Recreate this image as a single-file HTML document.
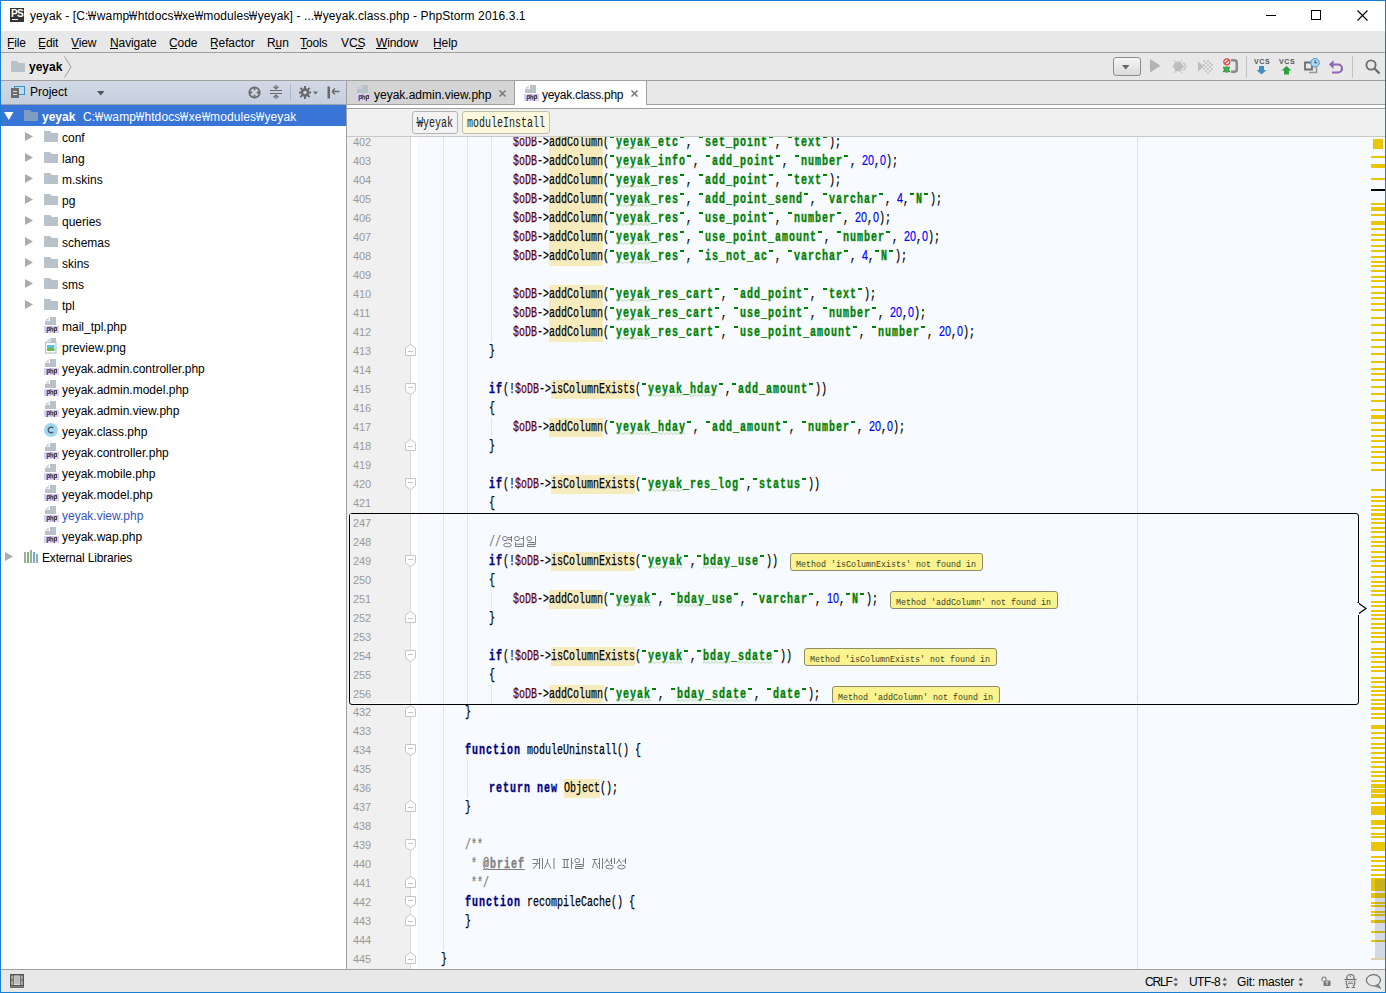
<!DOCTYPE html><html><head><meta charset="utf-8"><style>
*{margin:0;padding:0;box-sizing:border-box}
html,body{width:1386px;height:993px;overflow:hidden;background:#fff}
body{position:relative;font-family:"Liberation Sans",sans-serif;font-size:12px;color:#000}
.a{position:absolute}
.t{position:absolute;white-space:pre;line-height:1}
.dg{font-family:'Liberation Sans',sans-serif;font-size:11px;letter-spacing:-0.12px}
.dgc{font-family:'Liberation Sans',sans-serif;font-size:14px;transform:scaleX(0.7707);transform-origin:0 0;-webkit-text-stroke:0.2px currentColor}
.wn{display:inline-block;width:8.4px;overflow:visible;position:relative}
.wn{transform:scaleX(0.72);transform-origin:0 0}
.wn::after{content:'';position:absolute;left:0;right:-3px;top:5px;height:1px;background:currentColor}
svg{position:absolute;overflow:visible}
.m{font-family:'Liberation Mono',monospace;font-size:14.0px;transform:scaleX(0.7143);transform-origin:0 0;-webkit-text-stroke:0.25px currentColor}.mb{font-weight:bold;letter-spacing:1.400px;-webkit-text-stroke:0.35px currentColor}</style></head><body><div class="a" style="left:0px;top:0px;width:1386px;height:993px;background:#fff"></div><div class="a" style="left:0px;top:0px;width:1386px;height:31px;background:#fff"></div><div class="a" style="left:10px;top:8px;width:14px;height:14px;background:#333"></div><div class="t" style="left:11px;top:9px;font-size:10px;font-weight:bold;color:#fff;letter-spacing:-0.6px">PS</div><div class="a" style="left:12px;top:19px;width:6px;height:1px;background:#fff"></div><div class="t" style="left:30px;top:10px;font-size:12px;color:#000;letter-spacing:0.1px">yeyak - [C:<span class="wn">W</span>wamp<span class="wn">W</span>htdocs<span class="wn">W</span>xe<span class="wn">W</span>modules<span class="wn">W</span>yeyak] - ...<span class="wn">W</span>yeyak.class.php - PhpStorm 2016.3.1</div><div class="a" style="left:1266px;top:15px;width:10px;height:1px;background:#000"></div><div class="a" style="left:1311px;top:10px;width:10px;height:10px;border:1px solid #000"></div><svg style="left:1357px;top:10px" width="11" height="11"><path d="M0.5 0.5L10.5 10.5M10.5 0.5L0.5 10.5" stroke="#000" stroke-width="1.1"/></svg><div class="a" style="left:1px;top:31px;width:1384px;height:21px;background:#e8e8e8"></div><div class="a" style="left:1px;top:52px;width:1384px;height:1px;background:#a0a0a0"></div><div class="a" style="left:1px;top:53px;width:1384px;height:27px;background:#e8e8e8"></div><div class="a" style="left:1px;top:80px;width:1384px;height:1px;background:#a0a0a0"></div><div class="a" style="left:1px;top:81px;width:345px;height:23px;background:linear-gradient(#d2d9e6,#c6cfdd)"></div><div class="a" style="left:1px;top:104px;width:345px;height:1px;background:#9aa3b0"></div><div class="a" style="left:1px;top:105px;width:345px;height:864px;background:#fff"></div><div class="a" style="left:346px;top:81px;width:1px;height:888px;background:#a0a0a0"></div><div class="a" style="left:347px;top:81px;width:1038px;height:23px;background:#e8e8e8"></div><div class="a" style="left:347px;top:104px;width:1038px;height:1px;background:#a0a0a0"></div><div class="a" style="left:347px;top:105px;width:1038px;height:3px;background:#fff"></div><div class="a" style="left:347px;top:108px;width:1038px;height:1px;background:#a0a0a0"></div><div class="a" style="left:347px;top:109px;width:1038px;height:27px;background:#f0f0f0"></div><div class="a" style="left:347px;top:136px;width:1038px;height:1px;background:#c8c8c8"></div><div class="a" style="left:347px;top:137px;width:1038px;height:832px;background:#f7faff"></div><div class="a" style="left:347px;top:137px;width:63px;height:832px;background:#f0f0f0"></div><div class="a" style="left:410px;top:137px;width:1px;height:832px;background:#d8d8d8"></div><div class="a" style="left:411px;top:137px;width:6px;height:832px;background:#fff"></div><div class="t" style="left:7px;top:37px;font-size:12px;color:#000;letter-spacing:-0.1px">File</div><div class="t" style="left:38px;top:37px;font-size:12px;color:#000;letter-spacing:-0.1px">Edit</div><div class="t" style="left:71px;top:37px;font-size:12px;color:#000;letter-spacing:-0.1px">View</div><div class="t" style="left:110px;top:37px;font-size:12px;color:#000;letter-spacing:-0.1px">Navigate</div><div class="t" style="left:169px;top:37px;font-size:12px;color:#000;letter-spacing:-0.1px">Code</div><div class="t" style="left:210px;top:37px;font-size:12px;color:#000;letter-spacing:-0.1px">Refactor</div><div class="t" style="left:267px;top:37px;font-size:12px;color:#000;letter-spacing:-0.1px">Run</div><div class="t" style="left:300px;top:37px;font-size:12px;color:#000;letter-spacing:-0.1px">Tools</div><div class="t" style="left:341px;top:37px;font-size:12px;color:#000;letter-spacing:-0.1px">VCS</div><div class="t" style="left:376px;top:37px;font-size:12px;color:#000;letter-spacing:-0.1px">Window</div><div class="t" style="left:433px;top:37px;font-size:12px;color:#000;letter-spacing:-0.1px">Help</div><div class="a" style="left:8px;top:48px;width:6px;height:1px;background:#000"></div><div class="a" style="left:39px;top:48px;width:6px;height:1px;background:#000"></div><div class="a" style="left:72px;top:48px;width:7px;height:1px;background:#000"></div><div class="a" style="left:110px;top:48px;width:8px;height:1px;background:#000"></div><div class="a" style="left:170px;top:48px;width:7px;height:1px;background:#000"></div><div class="a" style="left:211px;top:48px;width:6px;height:1px;background:#000"></div><div class="a" style="left:275px;top:48px;width:6px;height:1px;background:#000"></div><div class="a" style="left:301px;top:48px;width:6px;height:1px;background:#000"></div><div class="a" style="left:356px;top:48px;width:7px;height:1px;background:#000"></div><div class="a" style="left:376px;top:48px;width:11px;height:1px;background:#000"></div><div class="a" style="left:434px;top:48px;width:7px;height:1px;background:#000"></div><svg style="left:11px;top:61px" width="14" height="11"><path d="M0 0H6L8 2H14V11H0Z" fill="#b9c1c9"/></svg><div class="t" style="left:29px;top:61px;font-size:12px;font-weight:bold;color:#000">yeyak</div><svg style="left:64px;top:56px" width="8" height="22"><path d="M0.5 0.5L7 11L0.5 21.5" stroke="#9a9a9a" fill="none" stroke-width="1"/></svg><div class="a" style="left:14px;top:86px;width:11px;height:9px;background:#3d8fc4"></div><div class="a" style="left:15px;top:87px;width:9px;height:7px;background:#b8dcf3"></div><div class="a" style="left:11px;top:88px;width:8px;height:10px;background:#6e6e6e"></div><div class="a" style="left:13px;top:91px;width:4px;height:1px;background:#ddd"></div><div class="a" style="left:13px;top:94px;width:4px;height:1px;background:#ddd"></div><div class="t" style="left:30px;top:86px;font-size:12px;color:#000">Project</div><svg style="left:97px;top:91px" width="8" height="5"><path d="M0 0H7.5L3.75 4.5Z" fill="#555"/></svg><svg style="left:248px;top:86px" width="13" height="13"><circle cx="6.5" cy="6.5" r="5.2" stroke="#6a6a6a" stroke-width="1.8" fill="none"/><path d="M6.5 1V4.2M6.5 8.8V12M1 6.5H4.2M8.8 6.5H12" stroke="#6a6a6a" stroke-width="1.8"/></svg><svg style="left:270px;top:85px" width="12" height="14"><path d="M0 5.5H12M0 8.5H12" stroke="#6a6a6a" stroke-width="1"/><path d="M6 0V4M6 10V14" stroke="#6a6a6a" stroke-width="1.2"/><path d="M3.5 1.5L6 4L8.5 1.5M3.5 12.5L6 10L8.5 12.5" stroke="#6a6a6a" fill="none" stroke-width="1.2"/></svg><div class="a" style="left:290px;top:84px;width:1px;height:17px;background:#b0b7c2"></div><svg style="left:299px;top:86px" width="20" height="13"><g fill="#6a6a6a"><circle cx="6" cy="6.5" r="4.3"/><rect x="5" y="0" width="2" height="13"/><rect x="0" y="5.5" width="12" height="2"/><rect x="5" y="0" width="2" height="13" transform="rotate(45 6 6.5)"/><rect x="5" y="0" width="2" height="13" transform="rotate(-45 6 6.5)"/></g><circle cx="6" cy="6.5" r="1.8" fill="#ccd4e2"/><path d="M14 5.5H19L16.5 8.5Z" fill="#6a6a6a"/></svg><svg style="left:327px;top:86px" width="13" height="13"><rect x="0.5" y="0.5" width="2.5" height="12" fill="#6a6a6a"/><path d="M5 5.5H12.5M5 5.5L8 2.5M5 5.5L8 8.5" stroke="#6a6a6a" stroke-width="1.3" fill="none"/></svg><div class="a" style="left:1px;top:105px;width:345px;height:21px;background:#3875d7"></div><svg style="left:4px;top:112px" width="10" height="9"><path d="M0 0H9.5L4.75 8Z" fill="#fff"/></svg><svg style="left:24px;top:110px" width="14" height="11"><path d="M0 0H6L8 2H14V11H0Z" fill="#7f9cc3"/></svg><div class="t" style="left:42px;top:111px;font-size:12px;font-weight:bold;color:#fff">yeyak</div><div class="t" style="left:83px;top:111px;font-size:12px;color:#fff;letter-spacing:0.1px">C:<span class="wn">W</span>wamp<span class="wn">W</span>htdocs<span class="wn">W</span>xe<span class="wn">W</span>modules<span class="wn">W</span>yeyak</div><svg style="left:25px;top:132px" width="9" height="10"><path d="M0 0L8 4.5L0 9Z" fill="#ababab"/></svg><svg style="left:44px;top:131px" width="14" height="11"><path d="M0 0H6L8 2H14V11H0Z" fill="#b9c1c9"/></svg><div class="t" style="left:62px;top:132px;font-size:12px;color:#000">conf</div><svg style="left:25px;top:153px" width="9" height="10"><path d="M0 0L8 4.5L0 9Z" fill="#ababab"/></svg><svg style="left:44px;top:152px" width="14" height="11"><path d="M0 0H6L8 2H14V11H0Z" fill="#b9c1c9"/></svg><div class="t" style="left:62px;top:153px;font-size:12px;color:#000">lang</div><svg style="left:25px;top:174px" width="9" height="10"><path d="M0 0L8 4.5L0 9Z" fill="#ababab"/></svg><svg style="left:44px;top:173px" width="14" height="11"><path d="M0 0H6L8 2H14V11H0Z" fill="#b9c1c9"/></svg><div class="t" style="left:62px;top:174px;font-size:12px;color:#000">m.skins</div><svg style="left:25px;top:195px" width="9" height="10"><path d="M0 0L8 4.5L0 9Z" fill="#ababab"/></svg><svg style="left:44px;top:194px" width="14" height="11"><path d="M0 0H6L8 2H14V11H0Z" fill="#b9c1c9"/></svg><div class="t" style="left:62px;top:195px;font-size:12px;color:#000">pg</div><svg style="left:25px;top:216px" width="9" height="10"><path d="M0 0L8 4.5L0 9Z" fill="#ababab"/></svg><svg style="left:44px;top:215px" width="14" height="11"><path d="M0 0H6L8 2H14V11H0Z" fill="#b9c1c9"/></svg><div class="t" style="left:62px;top:216px;font-size:12px;color:#000">queries</div><svg style="left:25px;top:237px" width="9" height="10"><path d="M0 0L8 4.5L0 9Z" fill="#ababab"/></svg><svg style="left:44px;top:236px" width="14" height="11"><path d="M0 0H6L8 2H14V11H0Z" fill="#b9c1c9"/></svg><div class="t" style="left:62px;top:237px;font-size:12px;color:#000">schemas</div><svg style="left:25px;top:258px" width="9" height="10"><path d="M0 0L8 4.5L0 9Z" fill="#ababab"/></svg><svg style="left:44px;top:257px" width="14" height="11"><path d="M0 0H6L8 2H14V11H0Z" fill="#b9c1c9"/></svg><div class="t" style="left:62px;top:258px;font-size:12px;color:#000">skins</div><svg style="left:25px;top:279px" width="9" height="10"><path d="M0 0L8 4.5L0 9Z" fill="#ababab"/></svg><svg style="left:44px;top:278px" width="14" height="11"><path d="M0 0H6L8 2H14V11H0Z" fill="#b9c1c9"/></svg><div class="t" style="left:62px;top:279px;font-size:12px;color:#000">sms</div><svg style="left:25px;top:300px" width="9" height="10"><path d="M0 0L8 4.5L0 9Z" fill="#ababab"/></svg><svg style="left:44px;top:299px" width="14" height="11"><path d="M0 0H6L8 2H14V11H0Z" fill="#b9c1c9"/></svg><div class="t" style="left:62px;top:300px;font-size:12px;color:#000">tpl</div><svg style="left:44px;top:317px" width="15" height="16"><path d="M1 3.6L4.7 0.4V3.6Z" fill="#c5cbd1"/><path d="M6 0H12V8H1V4H6Z" fill="#b9c1c9"/><rect x="0" y="9" width="15" height="7" fill="#dccff5"/><path d="M3.2 10.6V16M3.2 10.6H5.3V13.5H3.2M6.8 9.5V14.5M6.8 11.2H8.8V14.5M10.4 10.6V16M10.4 10.6H12.5V13.5H10.4" stroke="#4a4352" stroke-width="1.1" fill="none"/></svg><div class="t" style="left:62px;top:321px;font-size:12px;color:#000">mail_tpl.php</div><svg style="left:45px;top:338px" width="12" height="16"><path d="M1 3.6L4.7 0.4V3.6Z" fill="#c5cbd1"/><path d="M5.5 0H11V4H5.5Z" fill="#b9c1c9"/><rect x="0.5" y="4.5" width="10.5" height="10.5" fill="#fff" stroke="#b9c1c9" stroke-width="1.2"/><rect x="2" y="7" width="7.5" height="6" fill="#5ec0e8"/><path d="M2 10.5Q5 8.5 9.5 11V13H2Z" fill="#6dbb4e"/></svg><div class="t" style="left:62px;top:342px;font-size:12px;color:#000">preview.png</div><svg style="left:44px;top:359px" width="15" height="16"><path d="M1 3.6L4.7 0.4V3.6Z" fill="#c5cbd1"/><path d="M6 0H12V8H1V4H6Z" fill="#b9c1c9"/><rect x="0" y="9" width="15" height="7" fill="#dccff5"/><path d="M3.2 10.6V16M3.2 10.6H5.3V13.5H3.2M6.8 9.5V14.5M6.8 11.2H8.8V14.5M10.4 10.6V16M10.4 10.6H12.5V13.5H10.4" stroke="#4a4352" stroke-width="1.1" fill="none"/></svg><div class="t" style="left:62px;top:363px;font-size:12px;color:#000">yeyak.admin.controller.php</div><svg style="left:44px;top:380px" width="15" height="16"><path d="M1 3.6L4.7 0.4V3.6Z" fill="#c5cbd1"/><path d="M6 0H12V8H1V4H6Z" fill="#b9c1c9"/><rect x="0" y="9" width="15" height="7" fill="#dccff5"/><path d="M3.2 10.6V16M3.2 10.6H5.3V13.5H3.2M6.8 9.5V14.5M6.8 11.2H8.8V14.5M10.4 10.6V16M10.4 10.6H12.5V13.5H10.4" stroke="#4a4352" stroke-width="1.1" fill="none"/></svg><div class="t" style="left:62px;top:384px;font-size:12px;color:#000">yeyak.admin.model.php</div><svg style="left:44px;top:401px" width="15" height="16"><path d="M1 3.6L4.7 0.4V3.6Z" fill="#c5cbd1"/><path d="M6 0H12V8H1V4H6Z" fill="#b9c1c9"/><rect x="0" y="9" width="15" height="7" fill="#dccff5"/><path d="M3.2 10.6V16M3.2 10.6H5.3V13.5H3.2M6.8 9.5V14.5M6.8 11.2H8.8V14.5M10.4 10.6V16M10.4 10.6H12.5V13.5H10.4" stroke="#4a4352" stroke-width="1.1" fill="none"/></svg><div class="t" style="left:62px;top:405px;font-size:12px;color:#000">yeyak.admin.view.php</div><svg style="left:44px;top:423px" width="15" height="15"><circle cx="7" cy="7" r="7" fill="#9fd8ee"/><path d="M9.2 5A2.9 2.9 0 1 0 9.2 9" stroke="#46535b" stroke-width="1.3" fill="none"/></svg><div class="t" style="left:62px;top:426px;font-size:12px;color:#000">yeyak.class.php</div><svg style="left:44px;top:443px" width="15" height="16"><path d="M1 3.6L4.7 0.4V3.6Z" fill="#c5cbd1"/><path d="M6 0H12V8H1V4H6Z" fill="#b9c1c9"/><rect x="0" y="9" width="15" height="7" fill="#dccff5"/><path d="M3.2 10.6V16M3.2 10.6H5.3V13.5H3.2M6.8 9.5V14.5M6.8 11.2H8.8V14.5M10.4 10.6V16M10.4 10.6H12.5V13.5H10.4" stroke="#4a4352" stroke-width="1.1" fill="none"/></svg><div class="t" style="left:62px;top:447px;font-size:12px;color:#000">yeyak.controller.php</div><svg style="left:44px;top:464px" width="15" height="16"><path d="M1 3.6L4.7 0.4V3.6Z" fill="#c5cbd1"/><path d="M6 0H12V8H1V4H6Z" fill="#b9c1c9"/><rect x="0" y="9" width="15" height="7" fill="#dccff5"/><path d="M3.2 10.6V16M3.2 10.6H5.3V13.5H3.2M6.8 9.5V14.5M6.8 11.2H8.8V14.5M10.4 10.6V16M10.4 10.6H12.5V13.5H10.4" stroke="#4a4352" stroke-width="1.1" fill="none"/></svg><div class="t" style="left:62px;top:468px;font-size:12px;color:#000">yeyak.mobile.php</div><svg style="left:44px;top:485px" width="15" height="16"><path d="M1 3.6L4.7 0.4V3.6Z" fill="#c5cbd1"/><path d="M6 0H12V8H1V4H6Z" fill="#b9c1c9"/><rect x="0" y="9" width="15" height="7" fill="#dccff5"/><path d="M3.2 10.6V16M3.2 10.6H5.3V13.5H3.2M6.8 9.5V14.5M6.8 11.2H8.8V14.5M10.4 10.6V16M10.4 10.6H12.5V13.5H10.4" stroke="#4a4352" stroke-width="1.1" fill="none"/></svg><div class="t" style="left:62px;top:489px;font-size:12px;color:#000">yeyak.model.php</div><svg style="left:44px;top:506px" width="15" height="16"><path d="M1 3.6L4.7 0.4V3.6Z" fill="#c5cbd1"/><path d="M6 0H12V8H1V4H6Z" fill="#b9c1c9"/><rect x="0" y="9" width="15" height="7" fill="#dccff5"/><path d="M3.2 10.6V16M3.2 10.6H5.3V13.5H3.2M6.8 9.5V14.5M6.8 11.2H8.8V14.5M10.4 10.6V16M10.4 10.6H12.5V13.5H10.4" stroke="#4a4352" stroke-width="1.1" fill="none"/></svg><div class="t" style="left:62px;top:510px;font-size:12px;color:#3355bb">yeyak.view.php</div><svg style="left:44px;top:527px" width="15" height="16"><path d="M1 3.6L4.7 0.4V3.6Z" fill="#c5cbd1"/><path d="M6 0H12V8H1V4H6Z" fill="#b9c1c9"/><rect x="0" y="9" width="15" height="7" fill="#dccff5"/><path d="M3.2 10.6V16M3.2 10.6H5.3V13.5H3.2M6.8 9.5V14.5M6.8 11.2H8.8V14.5M10.4 10.6V16M10.4 10.6H12.5V13.5H10.4" stroke="#4a4352" stroke-width="1.1" fill="none"/></svg><div class="t" style="left:62px;top:531px;font-size:12px;color:#000">yeyak.wap.php</div><svg style="left:5px;top:552px" width="9" height="10"><path d="M0 0L8 4.5L0 9Z" fill="#ababab"/></svg><svg style="left:24px;top:549px" width="15" height="14"><g stroke-width="1.6"><path d="M1 3V14" stroke="#8a939c"/><path d="M4 3V14" stroke="#5aa846"/><path d="M7 1V14" stroke="#8a939c"/><path d="M10 3V14" stroke="#3ba0d8"/><path d="M13 5V14" stroke="#8a939c"/></g></svg><div class="t" style="left:42px;top:552px;font-size:12px;color:#000;letter-spacing:-0.18px">External Libraries</div><div class="a" style="left:347px;top:81px;width:168px;height:23px;background:#d4d4d4"></div><div class="a" style="left:514px;top:81px;width:1px;height:23px;background:#a0a0a0"></div><div class="a" style="left:515px;top:80px;width:131px;height:28px;background:#fff"></div><div class="a" style="left:515px;top:80px;width:131px;height:1px;background:#a0a0a0"></div><div class="a" style="left:646px;top:80px;width:1px;height:25px;background:#a0a0a0"></div><div class="a" style="left:647px;top:104px;width:738px;height:1px;background:#a0a0a0"></div><svg style="left:356px;top:85px" width="15" height="16"><path d="M1 3.6L4.7 0.4V3.6Z" fill="#c5cbd1"/><path d="M6 0H12V8H1V4H6Z" fill="#b9c1c9"/><rect x="0" y="9" width="15" height="7" fill="#dccff5"/><path d="M3.2 10.6V16M3.2 10.6H5.3V13.5H3.2M6.8 9.5V14.5M6.8 11.2H8.8V14.5M10.4 10.6V16M10.4 10.6H12.5V13.5H10.4" stroke="#4a4352" stroke-width="1.1" fill="none"/></svg><div class="t" style="left:374px;top:89px;font-size:12px;color:#000">yeyak.admin.view.php</div><svg style="left:499px;top:90px" width="7" height="7"><path d="M0.5 0.5L6.5 6.5M6.5 0.5L0.5 6.5" stroke="#777" stroke-width="1.5"/></svg><svg style="left:524px;top:85px" width="15" height="16"><path d="M1 3.6L4.7 0.4V3.6Z" fill="#c5cbd1"/><path d="M6 0H12V8H1V4H6Z" fill="#b9c1c9"/><rect x="0" y="9" width="15" height="7" fill="#dccff5"/><path d="M3.2 10.6V16M3.2 10.6H5.3V13.5H3.2M6.8 9.5V14.5M6.8 11.2H8.8V14.5M10.4 10.6V16M10.4 10.6H12.5V13.5H10.4" stroke="#4a4352" stroke-width="1.1" fill="none"/></svg><div class="t" style="left:542px;top:89px;font-size:12px;color:#000;letter-spacing:-0.28px">yeyak.class.php</div><svg style="left:631px;top:90px" width="7" height="7"><path d="M0.5 0.5L6.5 6.5M6.5 0.5L0.5 6.5" stroke="#777" stroke-width="1.5"/></svg><div class="a" style="left:412px;top:111px;width:46px;height:23px;background:#f3f3f3;border:1px solid #b4b4b4;border-radius:3px"></div><div class="t m" style="left:417px;top:116px;color:#222;-webkit-text-stroke:0"><span style="position:relative">W<span style="position:absolute;left:-1px;right:-1px;top:7px;height:1px;background:#222"></span></span>yeyak</div><div class="a" style="left:462px;top:111px;width:88px;height:23px;background:#fbf8dc;border:1px solid #c2c0a8;border-radius:3px"></div><div class="t m" style="left:467px;top:116px;color:#222;-webkit-text-stroke:0">moduleInstall</div><div class="a" style="left:0;top:0;width:1386px;height:993px;clip-path:inset(137px 0 24px 0)"><div class="a" style="left:443px;top:137px;width:1px;height:813px;background:#e2e5ea"></div><div class="a" style="left:467px;top:137px;width:1px;height:567px;background:#e2e5ea"></div><div class="a" style="left:491px;top:137px;width:1px;height:205px;background:#e2e5ea"></div><div class="a" style="left:491px;top:418px;width:1px;height:19px;background:#e2e5ea"></div><div class="a" style="left:467px;top:760px;width:1px;height:38px;background:#e2e5ea"></div><div class="t dg" style="left:353px;top:137px;color:#999">402</div><div class="t m" style="left:513px;top:135px;color:#660000;">$oDB</div><div class="t m" style="left:537px;top:135px;color:#000;">-</div><div class="t m" style="left:543px;top:135px;color:#000;">&gt;</div><div class="a" style="left:549px;top:133px;width:54px;height:19px;background:#f6ebbc"></div><div class="t m" style="left:549px;top:135px;color:#000;">addColumn</div><div class="t m" style="left:603px;top:135px;color:#000;">(</div><div class="t m mb" style="left:616px;top:135px;color:#008000;">yeyak_etc</div><div class="a" style="left:610px;top:136px;width:4px;height:2px;background:#008000"></div><div class="a" style="left:680px;top:136px;width:4px;height:2px;background:#008000"></div><svg style="left:616px;top:147px" width="35" height="3"><path d="M0 2.5 L1 0.5 L3 2.5 L5 0.5 L7 2.5 L9 0.5 L11 2.5 L13 0.5 L15 2.5 L17 0.5 L19 2.5 L21 0.5 L23 2.5 L25 0.5 L27 2.5 L29 0.5 L31 2.5 L33 0.5 L35 2.5" stroke="#b3d8b3" stroke-width="1" fill="none"/></svg><div class="t m" style="left:686px;top:135px;color:#000;">,</div><div class="t m mb" style="left:705px;top:135px;color:#008000;">set_point</div><div class="a" style="left:699px;top:136px;width:4px;height:2px;background:#008000"></div><div class="a" style="left:769px;top:136px;width:4px;height:2px;background:#008000"></div><div class="t m" style="left:775px;top:135px;color:#000;">,</div><div class="t m mb" style="left:794px;top:135px;color:#008000;">text</div><div class="a" style="left:788px;top:136px;width:4px;height:2px;background:#008000"></div><div class="a" style="left:823px;top:136px;width:4px;height:2px;background:#008000"></div><div class="t m" style="left:829px;top:135px;color:#000;">)</div><div class="t m" style="left:835px;top:135px;color:#000;">;</div><div class="t dg" style="left:353px;top:156px;color:#999">403</div><div class="t m" style="left:513px;top:154px;color:#660000;">$oDB</div><div class="t m" style="left:537px;top:154px;color:#000;">-</div><div class="t m" style="left:543px;top:154px;color:#000;">&gt;</div><div class="a" style="left:549px;top:152px;width:54px;height:19px;background:#f6ebbc"></div><div class="t m" style="left:549px;top:154px;color:#000;">addColumn</div><div class="t m" style="left:603px;top:154px;color:#000;">(</div><div class="t m mb" style="left:616px;top:154px;color:#008000;">yeyak_info</div><div class="a" style="left:610px;top:155px;width:4px;height:2px;background:#008000"></div><div class="a" style="left:687px;top:155px;width:4px;height:2px;background:#008000"></div><svg style="left:616px;top:166px" width="35" height="3"><path d="M0 2.5 L1 0.5 L3 2.5 L5 0.5 L7 2.5 L9 0.5 L11 2.5 L13 0.5 L15 2.5 L17 0.5 L19 2.5 L21 0.5 L23 2.5 L25 0.5 L27 2.5 L29 0.5 L31 2.5 L33 0.5 L35 2.5" stroke="#b3d8b3" stroke-width="1" fill="none"/></svg><div class="t m" style="left:693px;top:154px;color:#000;">,</div><div class="t m mb" style="left:712px;top:154px;color:#008000;">add_point</div><div class="a" style="left:706px;top:155px;width:4px;height:2px;background:#008000"></div><div class="a" style="left:776px;top:155px;width:4px;height:2px;background:#008000"></div><div class="t m" style="left:782px;top:154px;color:#000;">,</div><div class="t m mb" style="left:801px;top:154px;color:#008000;">number</div><div class="a" style="left:795px;top:155px;width:4px;height:2px;background:#008000"></div><div class="a" style="left:844px;top:155px;width:4px;height:2px;background:#008000"></div><div class="t m" style="left:850px;top:154px;color:#000;">,</div><div class="t dgc" style="left:862px;top:153px;color:#0000ff">20</div><div class="t m" style="left:874px;top:154px;color:#000;">,</div><div class="t dgc" style="left:880px;top:153px;color:#0000ff">0</div><div class="t m" style="left:886px;top:154px;color:#000;">)</div><div class="t m" style="left:892px;top:154px;color:#000;">;</div><div class="t dg" style="left:353px;top:175px;color:#999">404</div><div class="t m" style="left:513px;top:173px;color:#660000;">$oDB</div><div class="t m" style="left:537px;top:173px;color:#000;">-</div><div class="t m" style="left:543px;top:173px;color:#000;">&gt;</div><div class="a" style="left:549px;top:171px;width:54px;height:19px;background:#f6ebbc"></div><div class="t m" style="left:549px;top:173px;color:#000;">addColumn</div><div class="t m" style="left:603px;top:173px;color:#000;">(</div><div class="t m mb" style="left:616px;top:173px;color:#008000;">yeyak_res</div><div class="a" style="left:610px;top:174px;width:4px;height:2px;background:#008000"></div><div class="a" style="left:680px;top:174px;width:4px;height:2px;background:#008000"></div><svg style="left:616px;top:185px" width="35" height="3"><path d="M0 2.5 L1 0.5 L3 2.5 L5 0.5 L7 2.5 L9 0.5 L11 2.5 L13 0.5 L15 2.5 L17 0.5 L19 2.5 L21 0.5 L23 2.5 L25 0.5 L27 2.5 L29 0.5 L31 2.5 L33 0.5 L35 2.5" stroke="#b3d8b3" stroke-width="1" fill="none"/></svg><div class="t m" style="left:686px;top:173px;color:#000;">,</div><div class="t m mb" style="left:705px;top:173px;color:#008000;">add_point</div><div class="a" style="left:699px;top:174px;width:4px;height:2px;background:#008000"></div><div class="a" style="left:769px;top:174px;width:4px;height:2px;background:#008000"></div><div class="t m" style="left:775px;top:173px;color:#000;">,</div><div class="t m mb" style="left:794px;top:173px;color:#008000;">text</div><div class="a" style="left:788px;top:174px;width:4px;height:2px;background:#008000"></div><div class="a" style="left:823px;top:174px;width:4px;height:2px;background:#008000"></div><div class="t m" style="left:829px;top:173px;color:#000;">)</div><div class="t m" style="left:835px;top:173px;color:#000;">;</div><div class="t dg" style="left:353px;top:194px;color:#999">405</div><div class="t m" style="left:513px;top:192px;color:#660000;">$oDB</div><div class="t m" style="left:537px;top:192px;color:#000;">-</div><div class="t m" style="left:543px;top:192px;color:#000;">&gt;</div><div class="a" style="left:549px;top:190px;width:54px;height:19px;background:#f6ebbc"></div><div class="t m" style="left:549px;top:192px;color:#000;">addColumn</div><div class="t m" style="left:603px;top:192px;color:#000;">(</div><div class="t m mb" style="left:616px;top:192px;color:#008000;">yeyak_res</div><div class="a" style="left:610px;top:193px;width:4px;height:2px;background:#008000"></div><div class="a" style="left:680px;top:193px;width:4px;height:2px;background:#008000"></div><svg style="left:616px;top:204px" width="35" height="3"><path d="M0 2.5 L1 0.5 L3 2.5 L5 0.5 L7 2.5 L9 0.5 L11 2.5 L13 0.5 L15 2.5 L17 0.5 L19 2.5 L21 0.5 L23 2.5 L25 0.5 L27 2.5 L29 0.5 L31 2.5 L33 0.5 L35 2.5" stroke="#b3d8b3" stroke-width="1" fill="none"/></svg><div class="t m" style="left:686px;top:192px;color:#000;">,</div><div class="t m mb" style="left:705px;top:192px;color:#008000;">add_point_send</div><div class="a" style="left:699px;top:193px;width:4px;height:2px;background:#008000"></div><div class="a" style="left:804px;top:193px;width:4px;height:2px;background:#008000"></div><div class="t m" style="left:810px;top:192px;color:#000;">,</div><div class="t m mb" style="left:829px;top:192px;color:#008000;">varchar</div><div class="a" style="left:823px;top:193px;width:4px;height:2px;background:#008000"></div><div class="a" style="left:879px;top:193px;width:4px;height:2px;background:#008000"></div><div class="t m" style="left:885px;top:192px;color:#000;">,</div><div class="t dgc" style="left:897px;top:191px;color:#0000ff">4</div><div class="t m" style="left:903px;top:192px;color:#000;">,</div><div class="t m mb" style="left:916px;top:192px;color:#008000;">N</div><div class="a" style="left:910px;top:193px;width:4px;height:2px;background:#008000"></div><div class="a" style="left:924px;top:193px;width:4px;height:2px;background:#008000"></div><div class="t m" style="left:930px;top:192px;color:#000;">)</div><div class="t m" style="left:936px;top:192px;color:#000;">;</div><div class="t dg" style="left:353px;top:213px;color:#999">406</div><div class="t m" style="left:513px;top:211px;color:#660000;">$oDB</div><div class="t m" style="left:537px;top:211px;color:#000;">-</div><div class="t m" style="left:543px;top:211px;color:#000;">&gt;</div><div class="a" style="left:549px;top:209px;width:54px;height:19px;background:#f6ebbc"></div><div class="t m" style="left:549px;top:211px;color:#000;">addColumn</div><div class="t m" style="left:603px;top:211px;color:#000;">(</div><div class="t m mb" style="left:616px;top:211px;color:#008000;">yeyak_res</div><div class="a" style="left:610px;top:212px;width:4px;height:2px;background:#008000"></div><div class="a" style="left:680px;top:212px;width:4px;height:2px;background:#008000"></div><svg style="left:616px;top:223px" width="35" height="3"><path d="M0 2.5 L1 0.5 L3 2.5 L5 0.5 L7 2.5 L9 0.5 L11 2.5 L13 0.5 L15 2.5 L17 0.5 L19 2.5 L21 0.5 L23 2.5 L25 0.5 L27 2.5 L29 0.5 L31 2.5 L33 0.5 L35 2.5" stroke="#b3d8b3" stroke-width="1" fill="none"/></svg><div class="t m" style="left:686px;top:211px;color:#000;">,</div><div class="t m mb" style="left:705px;top:211px;color:#008000;">use_point</div><div class="a" style="left:699px;top:212px;width:4px;height:2px;background:#008000"></div><div class="a" style="left:769px;top:212px;width:4px;height:2px;background:#008000"></div><div class="t m" style="left:775px;top:211px;color:#000;">,</div><div class="t m mb" style="left:794px;top:211px;color:#008000;">number</div><div class="a" style="left:788px;top:212px;width:4px;height:2px;background:#008000"></div><div class="a" style="left:837px;top:212px;width:4px;height:2px;background:#008000"></div><div class="t m" style="left:843px;top:211px;color:#000;">,</div><div class="t dgc" style="left:855px;top:210px;color:#0000ff">20</div><div class="t m" style="left:867px;top:211px;color:#000;">,</div><div class="t dgc" style="left:873px;top:210px;color:#0000ff">0</div><div class="t m" style="left:879px;top:211px;color:#000;">)</div><div class="t m" style="left:885px;top:211px;color:#000;">;</div><div class="t dg" style="left:353px;top:232px;color:#999">407</div><div class="t m" style="left:513px;top:230px;color:#660000;">$oDB</div><div class="t m" style="left:537px;top:230px;color:#000;">-</div><div class="t m" style="left:543px;top:230px;color:#000;">&gt;</div><div class="a" style="left:549px;top:228px;width:54px;height:19px;background:#f6ebbc"></div><div class="t m" style="left:549px;top:230px;color:#000;">addColumn</div><div class="t m" style="left:603px;top:230px;color:#000;">(</div><div class="t m mb" style="left:616px;top:230px;color:#008000;">yeyak_res</div><div class="a" style="left:610px;top:231px;width:4px;height:2px;background:#008000"></div><div class="a" style="left:680px;top:231px;width:4px;height:2px;background:#008000"></div><svg style="left:616px;top:242px" width="35" height="3"><path d="M0 2.5 L1 0.5 L3 2.5 L5 0.5 L7 2.5 L9 0.5 L11 2.5 L13 0.5 L15 2.5 L17 0.5 L19 2.5 L21 0.5 L23 2.5 L25 0.5 L27 2.5 L29 0.5 L31 2.5 L33 0.5 L35 2.5" stroke="#b3d8b3" stroke-width="1" fill="none"/></svg><div class="t m" style="left:686px;top:230px;color:#000;">,</div><div class="t m mb" style="left:705px;top:230px;color:#008000;">use_point_amount</div><div class="a" style="left:699px;top:231px;width:4px;height:2px;background:#008000"></div><div class="a" style="left:818px;top:231px;width:4px;height:2px;background:#008000"></div><div class="t m" style="left:824px;top:230px;color:#000;">,</div><div class="t m mb" style="left:843px;top:230px;color:#008000;">number</div><div class="a" style="left:837px;top:231px;width:4px;height:2px;background:#008000"></div><div class="a" style="left:886px;top:231px;width:4px;height:2px;background:#008000"></div><div class="t m" style="left:892px;top:230px;color:#000;">,</div><div class="t dgc" style="left:904px;top:229px;color:#0000ff">20</div><div class="t m" style="left:916px;top:230px;color:#000;">,</div><div class="t dgc" style="left:922px;top:229px;color:#0000ff">0</div><div class="t m" style="left:928px;top:230px;color:#000;">)</div><div class="t m" style="left:934px;top:230px;color:#000;">;</div><div class="t dg" style="left:353px;top:251px;color:#999">408</div><div class="t m" style="left:513px;top:249px;color:#660000;">$oDB</div><div class="t m" style="left:537px;top:249px;color:#000;">-</div><div class="t m" style="left:543px;top:249px;color:#000;">&gt;</div><div class="a" style="left:549px;top:247px;width:54px;height:19px;background:#f6ebbc"></div><div class="t m" style="left:549px;top:249px;color:#000;">addColumn</div><div class="t m" style="left:603px;top:249px;color:#000;">(</div><div class="t m mb" style="left:616px;top:249px;color:#008000;">yeyak_res</div><div class="a" style="left:610px;top:250px;width:4px;height:2px;background:#008000"></div><div class="a" style="left:680px;top:250px;width:4px;height:2px;background:#008000"></div><svg style="left:616px;top:261px" width="35" height="3"><path d="M0 2.5 L1 0.5 L3 2.5 L5 0.5 L7 2.5 L9 0.5 L11 2.5 L13 0.5 L15 2.5 L17 0.5 L19 2.5 L21 0.5 L23 2.5 L25 0.5 L27 2.5 L29 0.5 L31 2.5 L33 0.5 L35 2.5" stroke="#b3d8b3" stroke-width="1" fill="none"/></svg><div class="t m" style="left:686px;top:249px;color:#000;">,</div><div class="t m mb" style="left:705px;top:249px;color:#008000;">is_not_ac</div><div class="a" style="left:699px;top:250px;width:4px;height:2px;background:#008000"></div><div class="a" style="left:769px;top:250px;width:4px;height:2px;background:#008000"></div><div class="t m" style="left:775px;top:249px;color:#000;">,</div><div class="t m mb" style="left:794px;top:249px;color:#008000;">varchar</div><div class="a" style="left:788px;top:250px;width:4px;height:2px;background:#008000"></div><div class="a" style="left:844px;top:250px;width:4px;height:2px;background:#008000"></div><div class="t m" style="left:850px;top:249px;color:#000;">,</div><div class="t dgc" style="left:862px;top:248px;color:#0000ff">4</div><div class="t m" style="left:868px;top:249px;color:#000;">,</div><div class="t m mb" style="left:881px;top:249px;color:#008000;">N</div><div class="a" style="left:875px;top:250px;width:4px;height:2px;background:#008000"></div><div class="a" style="left:889px;top:250px;width:4px;height:2px;background:#008000"></div><div class="t m" style="left:895px;top:249px;color:#000;">)</div><div class="t m" style="left:901px;top:249px;color:#000;">;</div><div class="t dg" style="left:353px;top:270px;color:#999">409</div><div class="t dg" style="left:353px;top:289px;color:#999">410</div><div class="t m" style="left:513px;top:287px;color:#660000;">$oDB</div><div class="t m" style="left:537px;top:287px;color:#000;">-</div><div class="t m" style="left:543px;top:287px;color:#000;">&gt;</div><div class="a" style="left:549px;top:285px;width:54px;height:19px;background:#f6ebbc"></div><div class="t m" style="left:549px;top:287px;color:#000;">addColumn</div><div class="t m" style="left:603px;top:287px;color:#000;">(</div><div class="t m mb" style="left:616px;top:287px;color:#008000;">yeyak_res_cart</div><div class="a" style="left:610px;top:288px;width:4px;height:2px;background:#008000"></div><div class="a" style="left:715px;top:288px;width:4px;height:2px;background:#008000"></div><svg style="left:616px;top:299px" width="35" height="3"><path d="M0 2.5 L1 0.5 L3 2.5 L5 0.5 L7 2.5 L9 0.5 L11 2.5 L13 0.5 L15 2.5 L17 0.5 L19 2.5 L21 0.5 L23 2.5 L25 0.5 L27 2.5 L29 0.5 L31 2.5 L33 0.5 L35 2.5" stroke="#b3d8b3" stroke-width="1" fill="none"/></svg><div class="t m" style="left:721px;top:287px;color:#000;">,</div><div class="t m mb" style="left:740px;top:287px;color:#008000;">add_point</div><div class="a" style="left:734px;top:288px;width:4px;height:2px;background:#008000"></div><div class="a" style="left:804px;top:288px;width:4px;height:2px;background:#008000"></div><div class="t m" style="left:810px;top:287px;color:#000;">,</div><div class="t m mb" style="left:829px;top:287px;color:#008000;">text</div><div class="a" style="left:823px;top:288px;width:4px;height:2px;background:#008000"></div><div class="a" style="left:858px;top:288px;width:4px;height:2px;background:#008000"></div><div class="t m" style="left:864px;top:287px;color:#000;">)</div><div class="t m" style="left:870px;top:287px;color:#000;">;</div><div class="t dg" style="left:353px;top:308px;color:#999">411</div><div class="t m" style="left:513px;top:306px;color:#660000;">$oDB</div><div class="t m" style="left:537px;top:306px;color:#000;">-</div><div class="t m" style="left:543px;top:306px;color:#000;">&gt;</div><div class="a" style="left:549px;top:304px;width:54px;height:19px;background:#f6ebbc"></div><div class="t m" style="left:549px;top:306px;color:#000;">addColumn</div><div class="t m" style="left:603px;top:306px;color:#000;">(</div><div class="t m mb" style="left:616px;top:306px;color:#008000;">yeyak_res_cart</div><div class="a" style="left:610px;top:307px;width:4px;height:2px;background:#008000"></div><div class="a" style="left:715px;top:307px;width:4px;height:2px;background:#008000"></div><svg style="left:616px;top:318px" width="35" height="3"><path d="M0 2.5 L1 0.5 L3 2.5 L5 0.5 L7 2.5 L9 0.5 L11 2.5 L13 0.5 L15 2.5 L17 0.5 L19 2.5 L21 0.5 L23 2.5 L25 0.5 L27 2.5 L29 0.5 L31 2.5 L33 0.5 L35 2.5" stroke="#b3d8b3" stroke-width="1" fill="none"/></svg><div class="t m" style="left:721px;top:306px;color:#000;">,</div><div class="t m mb" style="left:740px;top:306px;color:#008000;">use_point</div><div class="a" style="left:734px;top:307px;width:4px;height:2px;background:#008000"></div><div class="a" style="left:804px;top:307px;width:4px;height:2px;background:#008000"></div><div class="t m" style="left:810px;top:306px;color:#000;">,</div><div class="t m mb" style="left:829px;top:306px;color:#008000;">number</div><div class="a" style="left:823px;top:307px;width:4px;height:2px;background:#008000"></div><div class="a" style="left:872px;top:307px;width:4px;height:2px;background:#008000"></div><div class="t m" style="left:878px;top:306px;color:#000;">,</div><div class="t dgc" style="left:890px;top:305px;color:#0000ff">20</div><div class="t m" style="left:902px;top:306px;color:#000;">,</div><div class="t dgc" style="left:908px;top:305px;color:#0000ff">0</div><div class="t m" style="left:914px;top:306px;color:#000;">)</div><div class="t m" style="left:920px;top:306px;color:#000;">;</div><div class="t dg" style="left:353px;top:327px;color:#999">412</div><div class="t m" style="left:513px;top:325px;color:#660000;">$oDB</div><div class="t m" style="left:537px;top:325px;color:#000;">-</div><div class="t m" style="left:543px;top:325px;color:#000;">&gt;</div><div class="a" style="left:549px;top:323px;width:54px;height:19px;background:#f6ebbc"></div><div class="t m" style="left:549px;top:325px;color:#000;">addColumn</div><div class="t m" style="left:603px;top:325px;color:#000;">(</div><div class="t m mb" style="left:616px;top:325px;color:#008000;">yeyak_res_cart</div><div class="a" style="left:610px;top:326px;width:4px;height:2px;background:#008000"></div><div class="a" style="left:715px;top:326px;width:4px;height:2px;background:#008000"></div><svg style="left:616px;top:337px" width="35" height="3"><path d="M0 2.5 L1 0.5 L3 2.5 L5 0.5 L7 2.5 L9 0.5 L11 2.5 L13 0.5 L15 2.5 L17 0.5 L19 2.5 L21 0.5 L23 2.5 L25 0.5 L27 2.5 L29 0.5 L31 2.5 L33 0.5 L35 2.5" stroke="#b3d8b3" stroke-width="1" fill="none"/></svg><div class="t m" style="left:721px;top:325px;color:#000;">,</div><div class="t m mb" style="left:740px;top:325px;color:#008000;">use_point_amount</div><div class="a" style="left:734px;top:326px;width:4px;height:2px;background:#008000"></div><div class="a" style="left:853px;top:326px;width:4px;height:2px;background:#008000"></div><div class="t m" style="left:859px;top:325px;color:#000;">,</div><div class="t m mb" style="left:878px;top:325px;color:#008000;">number</div><div class="a" style="left:872px;top:326px;width:4px;height:2px;background:#008000"></div><div class="a" style="left:921px;top:326px;width:4px;height:2px;background:#008000"></div><div class="t m" style="left:927px;top:325px;color:#000;">,</div><div class="t dgc" style="left:939px;top:324px;color:#0000ff">20</div><div class="t m" style="left:951px;top:325px;color:#000;">,</div><div class="t dgc" style="left:957px;top:324px;color:#0000ff">0</div><div class="t m" style="left:963px;top:325px;color:#000;">)</div><div class="t m" style="left:969px;top:325px;color:#000;">;</div><div class="t dg" style="left:353px;top:346px;color:#999">413</div><div class="t m" style="left:489px;top:344px;color:#000;">}</div><div class="t dg" style="left:353px;top:365px;color:#999">414</div><div class="t dg" style="left:353px;top:384px;color:#999">415</div><div class="t m mb" style="left:489px;top:382px;color:#000080;">if</div><div class="t m" style="left:503px;top:382px;color:#000;">(</div><div class="t m" style="left:509px;top:382px;color:#000;">!</div><div class="t m" style="left:515px;top:382px;color:#660000;">$oDB</div><div class="t m" style="left:539px;top:382px;color:#000;">-</div><div class="t m" style="left:545px;top:382px;color:#000;">&gt;</div><div class="a" style="left:551px;top:380px;width:84px;height:19px;background:#f6ebbc"></div><div class="t m" style="left:551px;top:382px;color:#000;">isColumnExists</div><div class="t m" style="left:635px;top:382px;color:#000;">(</div><div class="t m mb" style="left:648px;top:382px;color:#008000;">yeyak_hday</div><div class="a" style="left:642px;top:383px;width:4px;height:2px;background:#008000"></div><div class="a" style="left:719px;top:383px;width:4px;height:2px;background:#008000"></div><svg style="left:648px;top:394px" width="35" height="3"><path d="M0 2.5 L1 0.5 L3 2.5 L5 0.5 L7 2.5 L9 0.5 L11 2.5 L13 0.5 L15 2.5 L17 0.5 L19 2.5 L21 0.5 L23 2.5 L25 0.5 L27 2.5 L29 0.5 L31 2.5 L33 0.5 L35 2.5" stroke="#b3d8b3" stroke-width="1" fill="none"/></svg><svg style="left:690px;top:394px" width="28" height="3"><path d="M0 2.5 L1 0.5 L3 2.5 L5 0.5 L7 2.5 L9 0.5 L11 2.5 L13 0.5 L15 2.5 L17 0.5 L19 2.5 L21 0.5 L23 2.5 L25 0.5 L27 2.5" stroke="#b3d8b3" stroke-width="1" fill="none"/></svg><div class="t m" style="left:725px;top:382px;color:#000;">,</div><div class="t m mb" style="left:738px;top:382px;color:#008000;">add_amount</div><div class="a" style="left:732px;top:383px;width:4px;height:2px;background:#008000"></div><div class="a" style="left:809px;top:383px;width:4px;height:2px;background:#008000"></div><div class="t m" style="left:815px;top:382px;color:#000;">)</div><div class="t m" style="left:821px;top:382px;color:#000;">)</div><div class="t dg" style="left:353px;top:403px;color:#999">416</div><div class="t m" style="left:489px;top:401px;color:#000;">{</div><div class="t dg" style="left:353px;top:422px;color:#999">417</div><div class="t m" style="left:513px;top:420px;color:#660000;">$oDB</div><div class="t m" style="left:537px;top:420px;color:#000;">-</div><div class="t m" style="left:543px;top:420px;color:#000;">&gt;</div><div class="a" style="left:549px;top:418px;width:54px;height:19px;background:#f6ebbc"></div><div class="t m" style="left:549px;top:420px;color:#000;">addColumn</div><div class="t m" style="left:603px;top:420px;color:#000;">(</div><div class="t m mb" style="left:616px;top:420px;color:#008000;">yeyak_hday</div><div class="a" style="left:610px;top:421px;width:4px;height:2px;background:#008000"></div><div class="a" style="left:687px;top:421px;width:4px;height:2px;background:#008000"></div><svg style="left:616px;top:432px" width="35" height="3"><path d="M0 2.5 L1 0.5 L3 2.5 L5 0.5 L7 2.5 L9 0.5 L11 2.5 L13 0.5 L15 2.5 L17 0.5 L19 2.5 L21 0.5 L23 2.5 L25 0.5 L27 2.5 L29 0.5 L31 2.5 L33 0.5 L35 2.5" stroke="#b3d8b3" stroke-width="1" fill="none"/></svg><svg style="left:658px;top:432px" width="28" height="3"><path d="M0 2.5 L1 0.5 L3 2.5 L5 0.5 L7 2.5 L9 0.5 L11 2.5 L13 0.5 L15 2.5 L17 0.5 L19 2.5 L21 0.5 L23 2.5 L25 0.5 L27 2.5" stroke="#b3d8b3" stroke-width="1" fill="none"/></svg><div class="t m" style="left:693px;top:420px;color:#000;">,</div><div class="t m mb" style="left:712px;top:420px;color:#008000;">add_amount</div><div class="a" style="left:706px;top:421px;width:4px;height:2px;background:#008000"></div><div class="a" style="left:783px;top:421px;width:4px;height:2px;background:#008000"></div><div class="t m" style="left:789px;top:420px;color:#000;">,</div><div class="t m mb" style="left:808px;top:420px;color:#008000;">number</div><div class="a" style="left:802px;top:421px;width:4px;height:2px;background:#008000"></div><div class="a" style="left:851px;top:421px;width:4px;height:2px;background:#008000"></div><div class="t m" style="left:857px;top:420px;color:#000;">,</div><div class="t dgc" style="left:869px;top:419px;color:#0000ff">20</div><div class="t m" style="left:881px;top:420px;color:#000;">,</div><div class="t dgc" style="left:887px;top:419px;color:#0000ff">0</div><div class="t m" style="left:893px;top:420px;color:#000;">)</div><div class="t m" style="left:899px;top:420px;color:#000;">;</div><div class="t dg" style="left:353px;top:441px;color:#999">418</div><div class="t m" style="left:489px;top:439px;color:#000;">}</div><div class="t dg" style="left:353px;top:460px;color:#999">419</div><div class="t dg" style="left:353px;top:479px;color:#999">420</div><div class="t m mb" style="left:489px;top:477px;color:#000080;">if</div><div class="t m" style="left:503px;top:477px;color:#000;">(</div><div class="t m" style="left:509px;top:477px;color:#000;">!</div><div class="t m" style="left:515px;top:477px;color:#660000;">$oDB</div><div class="t m" style="left:539px;top:477px;color:#000;">-</div><div class="t m" style="left:545px;top:477px;color:#000;">&gt;</div><div class="a" style="left:551px;top:475px;width:84px;height:19px;background:#f6ebbc"></div><div class="t m" style="left:551px;top:477px;color:#000;">isColumnExists</div><div class="t m" style="left:635px;top:477px;color:#000;">(</div><div class="t m mb" style="left:648px;top:477px;color:#008000;">yeyak_res_log</div><div class="a" style="left:642px;top:478px;width:4px;height:2px;background:#008000"></div><div class="a" style="left:740px;top:478px;width:4px;height:2px;background:#008000"></div><svg style="left:648px;top:489px" width="35" height="3"><path d="M0 2.5 L1 0.5 L3 2.5 L5 0.5 L7 2.5 L9 0.5 L11 2.5 L13 0.5 L15 2.5 L17 0.5 L19 2.5 L21 0.5 L23 2.5 L25 0.5 L27 2.5 L29 0.5 L31 2.5 L33 0.5 L35 2.5" stroke="#b3d8b3" stroke-width="1" fill="none"/></svg><div class="t m" style="left:746px;top:477px;color:#000;">,</div><div class="t m mb" style="left:759px;top:477px;color:#008000;">status</div><div class="a" style="left:753px;top:478px;width:4px;height:2px;background:#008000"></div><div class="a" style="left:802px;top:478px;width:4px;height:2px;background:#008000"></div><div class="t m" style="left:808px;top:477px;color:#000;">)</div><div class="t m" style="left:814px;top:477px;color:#000;">)</div><div class="t dg" style="left:353px;top:498px;color:#999">421</div><div class="t m" style="left:489px;top:496px;color:#000;">{</div><div class="t dg" style="left:353px;top:707px;color:#999">432</div><div class="t m" style="left:465px;top:705px;color:#000;">}</div><div class="t dg" style="left:353px;top:726px;color:#999">433</div><div class="t dg" style="left:353px;top:745px;color:#999">434</div><div class="t m mb" style="left:465px;top:743px;color:#000080;">function</div><div class="t m" style="left:527px;top:743px;color:#000;">moduleUninstall</div><div class="t m" style="left:617px;top:743px;color:#000;">(</div><div class="t m" style="left:623px;top:743px;color:#000;">)</div><div class="t m" style="left:635px;top:743px;color:#000;">{</div><div class="t dg" style="left:353px;top:764px;color:#999">435</div><div class="t dg" style="left:353px;top:783px;color:#999">436</div><div class="t m mb" style="left:489px;top:781px;color:#000080;">return</div><div class="t m mb" style="left:537px;top:781px;color:#000080;">new</div><div class="a" style="left:564px;top:779px;width:36px;height:19px;background:#f6ebbc"></div><div class="t m" style="left:564px;top:781px;color:#000;">Object</div><div class="t m" style="left:600px;top:781px;color:#000;">(</div><div class="t m" style="left:606px;top:781px;color:#000;">)</div><div class="t m" style="left:612px;top:781px;color:#000;">;</div><div class="t dg" style="left:353px;top:802px;color:#999">437</div><div class="t m" style="left:465px;top:800px;color:#000;">}</div><div class="t dg" style="left:353px;top:821px;color:#999">438</div><div class="t dg" style="left:353px;top:840px;color:#999">439</div><div class="t m" style="left:417px;top:838px;color:#808080;">        /**</div><div class="t dg" style="left:353px;top:859px;color:#999">440</div><div class="t m" style="left:471px;top:857px;color:#808080;">* </div><div class="t m mb" style="left:483px;top:857px;color:#808080;text-decoration:underline">@brief</div><div class="t m" style="left:525px;top:857px;color:#808080;"> </div><svg style="left:532px;top:858px" width="12" height="12"><g stroke="#7a7a7a" stroke-width="1" fill="none"><path d="M0.5 1.5H5.5Q5.5 8 1 10.5M0.5 5.5H5M7.5 0V11M10.5 0V11M5.8 5.5H7.5"/></g></svg><svg style="left:544px;top:858px" width="12" height="12"><g stroke="#7a7a7a" stroke-width="1" fill="none"><path d="M3.5 1V4L0.5 10.5M3.5 4L7 10.5M10 0V11"/></g></svg><div class="t m" style="left:555px;top:857px;color:#808080;"> </div><svg style="left:562px;top:858px" width="12" height="12"><g stroke="#7a7a7a" stroke-width="1" fill="none"><path d="M0.5 1.5H7M2.2 1.5V9.5M5.2 1.5V9.5M0.5 9.5H7M9.5 0V11M9.5 5H11.5"/></g></svg><svg style="left:574px;top:858px" width="12" height="12"><g stroke="#7a7a7a" stroke-width="1" fill="none"><ellipse cx="3.2" cy="2.6" rx="2.4" ry="2.1"/><path d="M9.5 0V5.8M1.5 6.5H9.5V8.5H1.5V10.5H9.5"/></g></svg><div class="t m" style="left:585px;top:857px;color:#808080;"> </div><svg style="left:592px;top:858px" width="12" height="12"><g stroke="#7a7a7a" stroke-width="1" fill="none"><path d="M0.5 1.5H5.5M3 1.5L0.5 10M3 4L6 10M7.5 0V11M10.5 0V11M6 5.5H7.5"/></g></svg><svg style="left:604px;top:858px" width="12" height="12"><g stroke="#7a7a7a" stroke-width="1" fill="none"><path d="M3 0.5V2L0.5 5.5M3 2L5.5 5.5M7.5 0V6M10.5 0V6M6 3H7.5"/><ellipse cx="5.5" cy="9" rx="3.8" ry="1.9"/></g></svg><svg style="left:616px;top:858px" width="12" height="12"><g stroke="#7a7a7a" stroke-width="1" fill="none"><path d="M3 0.5V2L0.5 5.5M3 2L5.5 5.5M9.5 0V6M6.5 3H9.5"/><ellipse cx="5.5" cy="9" rx="3.8" ry="1.9"/></g></svg><div class="t dg" style="left:353px;top:878px;color:#999">441</div><div class="t m" style="left:471px;top:876px;color:#808080;">**/</div><div class="t dg" style="left:353px;top:897px;color:#999">442</div><div class="t m mb" style="left:465px;top:895px;color:#000080;">function</div><div class="t m" style="left:527px;top:895px;color:#000;">recompileCache</div><div class="t m" style="left:611px;top:895px;color:#000;">(</div><div class="t m" style="left:617px;top:895px;color:#000;">)</div><div class="t m" style="left:629px;top:895px;color:#000;">{</div><div class="t dg" style="left:353px;top:916px;color:#999">443</div><div class="t m" style="left:465px;top:914px;color:#000;">}</div><div class="t dg" style="left:353px;top:935px;color:#999">444</div><div class="t dg" style="left:353px;top:954px;color:#999">445</div><div class="t m" style="left:441px;top:952px;color:#000;">}</div><div class="a" style="left:1137px;top:137px;width:1px;height:832px;background:#e0e0e0"></div><svg style="left:405px;top:344px" width="11" height="12"><path d="M0.5 11.5H10.5V4L5.5 0.5L0.5 4Z" fill="#fff" stroke="#c6c6c6"/><path d="M3 7.5H8" stroke="#c6c6c6"/></svg><svg style="left:405px;top:439px" width="11" height="12"><path d="M0.5 11.5H10.5V4L5.5 0.5L0.5 4Z" fill="#fff" stroke="#c6c6c6"/><path d="M3 7.5H8" stroke="#c6c6c6"/></svg><svg style="left:405px;top:705px" width="11" height="12"><path d="M0.5 11.5H10.5V4L5.5 0.5L0.5 4Z" fill="#fff" stroke="#c6c6c6"/><path d="M3 7.5H8" stroke="#c6c6c6"/></svg><svg style="left:405px;top:800px" width="11" height="12"><path d="M0.5 11.5H10.5V4L5.5 0.5L0.5 4Z" fill="#fff" stroke="#c6c6c6"/><path d="M3 7.5H8" stroke="#c6c6c6"/></svg><svg style="left:405px;top:876px" width="11" height="12"><path d="M0.5 11.5H10.5V4L5.5 0.5L0.5 4Z" fill="#fff" stroke="#c6c6c6"/><path d="M3 7.5H8" stroke="#c6c6c6"/></svg><svg style="left:405px;top:914px" width="11" height="12"><path d="M0.5 11.5H10.5V4L5.5 0.5L0.5 4Z" fill="#fff" stroke="#c6c6c6"/><path d="M3 7.5H8" stroke="#c6c6c6"/></svg><svg style="left:405px;top:952px" width="11" height="12"><path d="M0.5 11.5H10.5V4L5.5 0.5L0.5 4Z" fill="#fff" stroke="#c6c6c6"/><path d="M3 7.5H8" stroke="#c6c6c6"/></svg><svg style="left:405px;top:383px" width="11" height="12"><path d="M0.5 0.5H10.5V8L5.5 11.5L0.5 8Z" fill="#fff" stroke="#c6c6c6"/><path d="M3 4.5H8" stroke="#c6c6c6"/></svg><svg style="left:405px;top:478px" width="11" height="12"><path d="M0.5 0.5H10.5V8L5.5 11.5L0.5 8Z" fill="#fff" stroke="#c6c6c6"/><path d="M3 4.5H8" stroke="#c6c6c6"/></svg><svg style="left:405px;top:744px" width="11" height="12"><path d="M0.5 0.5H10.5V8L5.5 11.5L0.5 8Z" fill="#fff" stroke="#c6c6c6"/><path d="M3 4.5H8" stroke="#c6c6c6"/></svg><svg style="left:405px;top:839px" width="11" height="12"><path d="M0.5 0.5H10.5V8L5.5 11.5L0.5 8Z" fill="#fff" stroke="#c6c6c6"/><path d="M3 4.5H8" stroke="#c6c6c6"/></svg><svg style="left:405px;top:896px" width="11" height="12"><path d="M0.5 0.5H10.5V8L5.5 11.5L0.5 8Z" fill="#fff" stroke="#c6c6c6"/><path d="M3 4.5H8" stroke="#c6c6c6"/></svg></div><div class="a" style="left:349px;top:513px;width:1010px;height:192px;border:1px solid #000;border-radius:3px;background:#f7faff;overflow:hidden"></div><div class="a" style="left:0;top:0;width:1386px;height:993px;clip-path:inset(514px 28px 290px 350px)"><div class="a" style="left:350px;top:514px;width:60px;height:189px;background:#f0f0f0"></div><div class="a" style="left:410px;top:514px;width:1px;height:189px;background:#d8d8d8"></div><div class="a" style="left:411px;top:514px;width:6px;height:189px;background:#fff"></div><div class="a" style="left:443px;top:514px;width:1px;height:189px;background:#e2e5ea"></div><div class="a" style="left:467px;top:514px;width:1px;height:189px;background:#e2e5ea"></div><div class="a" style="left:491px;top:590px;width:1px;height:19px;background:#e2e5ea"></div><div class="a" style="left:491px;top:685px;width:1px;height:19px;background:#e2e5ea"></div><div class="a" style="left:1137px;top:514px;width:1px;height:189px;background:#e0e0e0"></div><div class="t dg" style="left:353px;top:518px;color:#999">247</div><div class="t dg" style="left:353px;top:537px;color:#999">248</div><div class="t m" style="left:489px;top:535px;color:#808080;">//</div><svg style="left:502px;top:536px" width="12" height="12"><g stroke="#7a7a7a" stroke-width="1" fill="none"><ellipse cx="3" cy="2.6" rx="2.4" ry="2.1"/><path d="M9.5 0V5.8M6 1.6H9.5M6 3.6H9.5"/><ellipse cx="5.5" cy="9" rx="3.8" ry="1.9"/></g></svg><svg style="left:514px;top:536px" width="12" height="12"><g stroke="#7a7a7a" stroke-width="1" fill="none"><ellipse cx="3" cy="2.6" rx="2.4" ry="2.1"/><path d="M9.5 0V5.8M6.5 2.6H9.5M1.5 6.2V10.5H9.5V6.2M1.5 8.2H9.5"/></g></svg><svg style="left:526px;top:536px" width="12" height="12"><g stroke="#7a7a7a" stroke-width="1" fill="none"><ellipse cx="3.2" cy="2.6" rx="2.4" ry="2.1"/><path d="M9.5 0V5.8M1.5 6.5H9.5V8.5H1.5V10.5H9.5"/></g></svg><div class="t dg" style="left:353px;top:556px;color:#999">249</div><div class="t m mb" style="left:489px;top:554px;color:#000080;">if</div><div class="t m" style="left:503px;top:554px;color:#000;">(</div><div class="t m" style="left:509px;top:554px;color:#000;">!</div><div class="t m" style="left:515px;top:554px;color:#660000;">$oDB</div><div class="t m" style="left:539px;top:554px;color:#000;">-</div><div class="t m" style="left:545px;top:554px;color:#000;">&gt;</div><div class="a" style="left:551px;top:552px;width:84px;height:19px;background:#f6ebbc"></div><div class="t m" style="left:551px;top:554px;color:#000;">isColumnExists</div><div class="t m" style="left:635px;top:554px;color:#000;">(</div><div class="t m mb" style="left:648px;top:554px;color:#008000;">yeyak</div><div class="a" style="left:642px;top:555px;width:4px;height:2px;background:#008000"></div><div class="a" style="left:684px;top:555px;width:4px;height:2px;background:#008000"></div><svg style="left:648px;top:566px" width="35" height="3"><path d="M0 2.5 L1 0.5 L3 2.5 L5 0.5 L7 2.5 L9 0.5 L11 2.5 L13 0.5 L15 2.5 L17 0.5 L19 2.5 L21 0.5 L23 2.5 L25 0.5 L27 2.5 L29 0.5 L31 2.5 L33 0.5 L35 2.5" stroke="#b3d8b3" stroke-width="1" fill="none"/></svg><div class="t m" style="left:690px;top:554px;color:#000;">,</div><div class="t m mb" style="left:703px;top:554px;color:#008000;">bday_use</div><div class="a" style="left:697px;top:555px;width:4px;height:2px;background:#008000"></div><div class="a" style="left:760px;top:555px;width:4px;height:2px;background:#008000"></div><svg style="left:703px;top:566px" width="28" height="3"><path d="M0 2.5 L1 0.5 L3 2.5 L5 0.5 L7 2.5 L9 0.5 L11 2.5 L13 0.5 L15 2.5 L17 0.5 L19 2.5 L21 0.5 L23 2.5 L25 0.5 L27 2.5" stroke="#b3d8b3" stroke-width="1" fill="none"/></svg><div class="t m" style="left:766px;top:554px;color:#000;">)</div><div class="t m" style="left:772px;top:554px;color:#000;">)</div><div class="t dg" style="left:353px;top:575px;color:#999">250</div><div class="t m" style="left:489px;top:573px;color:#000;">{</div><div class="t dg" style="left:353px;top:594px;color:#999">251</div><div class="t m" style="left:513px;top:592px;color:#660000;">$oDB</div><div class="t m" style="left:537px;top:592px;color:#000;">-</div><div class="t m" style="left:543px;top:592px;color:#000;">&gt;</div><div class="a" style="left:549px;top:590px;width:54px;height:19px;background:#f6ebbc"></div><div class="t m" style="left:549px;top:592px;color:#000;">addColumn</div><div class="t m" style="left:603px;top:592px;color:#000;">(</div><div class="t m mb" style="left:616px;top:592px;color:#008000;">yeyak</div><div class="a" style="left:610px;top:593px;width:4px;height:2px;background:#008000"></div><div class="a" style="left:652px;top:593px;width:4px;height:2px;background:#008000"></div><svg style="left:616px;top:604px" width="35" height="3"><path d="M0 2.5 L1 0.5 L3 2.5 L5 0.5 L7 2.5 L9 0.5 L11 2.5 L13 0.5 L15 2.5 L17 0.5 L19 2.5 L21 0.5 L23 2.5 L25 0.5 L27 2.5 L29 0.5 L31 2.5 L33 0.5 L35 2.5" stroke="#b3d8b3" stroke-width="1" fill="none"/></svg><div class="t m" style="left:658px;top:592px;color:#000;">,</div><div class="t m mb" style="left:677px;top:592px;color:#008000;">bday_use</div><div class="a" style="left:671px;top:593px;width:4px;height:2px;background:#008000"></div><div class="a" style="left:734px;top:593px;width:4px;height:2px;background:#008000"></div><svg style="left:677px;top:604px" width="28" height="3"><path d="M0 2.5 L1 0.5 L3 2.5 L5 0.5 L7 2.5 L9 0.5 L11 2.5 L13 0.5 L15 2.5 L17 0.5 L19 2.5 L21 0.5 L23 2.5 L25 0.5 L27 2.5" stroke="#b3d8b3" stroke-width="1" fill="none"/></svg><div class="t m" style="left:740px;top:592px;color:#000;">,</div><div class="t m mb" style="left:759px;top:592px;color:#008000;">varchar</div><div class="a" style="left:753px;top:593px;width:4px;height:2px;background:#008000"></div><div class="a" style="left:809px;top:593px;width:4px;height:2px;background:#008000"></div><div class="t m" style="left:815px;top:592px;color:#000;">,</div><div class="t dgc" style="left:827px;top:591px;color:#0000ff">10</div><div class="t m" style="left:839px;top:592px;color:#000;">,</div><div class="t m mb" style="left:852px;top:592px;color:#008000;">N</div><div class="a" style="left:846px;top:593px;width:4px;height:2px;background:#008000"></div><div class="a" style="left:860px;top:593px;width:4px;height:2px;background:#008000"></div><div class="t m" style="left:866px;top:592px;color:#000;">)</div><div class="t m" style="left:872px;top:592px;color:#000;">;</div><div class="t dg" style="left:353px;top:613px;color:#999">252</div><div class="t m" style="left:489px;top:611px;color:#000;">}</div><div class="t dg" style="left:353px;top:632px;color:#999">253</div><div class="t dg" style="left:353px;top:651px;color:#999">254</div><div class="t m mb" style="left:489px;top:649px;color:#000080;">if</div><div class="t m" style="left:503px;top:649px;color:#000;">(</div><div class="t m" style="left:509px;top:649px;color:#000;">!</div><div class="t m" style="left:515px;top:649px;color:#660000;">$oDB</div><div class="t m" style="left:539px;top:649px;color:#000;">-</div><div class="t m" style="left:545px;top:649px;color:#000;">&gt;</div><div class="a" style="left:551px;top:647px;width:84px;height:19px;background:#f6ebbc"></div><div class="t m" style="left:551px;top:649px;color:#000;">isColumnExists</div><div class="t m" style="left:635px;top:649px;color:#000;">(</div><div class="t m mb" style="left:648px;top:649px;color:#008000;">yeyak</div><div class="a" style="left:642px;top:650px;width:4px;height:2px;background:#008000"></div><div class="a" style="left:684px;top:650px;width:4px;height:2px;background:#008000"></div><svg style="left:648px;top:661px" width="35" height="3"><path d="M0 2.5 L1 0.5 L3 2.5 L5 0.5 L7 2.5 L9 0.5 L11 2.5 L13 0.5 L15 2.5 L17 0.5 L19 2.5 L21 0.5 L23 2.5 L25 0.5 L27 2.5 L29 0.5 L31 2.5 L33 0.5 L35 2.5" stroke="#b3d8b3" stroke-width="1" fill="none"/></svg><div class="t m" style="left:690px;top:649px;color:#000;">,</div><div class="t m mb" style="left:703px;top:649px;color:#008000;">bday_sdate</div><div class="a" style="left:697px;top:650px;width:4px;height:2px;background:#008000"></div><div class="a" style="left:774px;top:650px;width:4px;height:2px;background:#008000"></div><svg style="left:703px;top:661px" width="28" height="3"><path d="M0 2.5 L1 0.5 L3 2.5 L5 0.5 L7 2.5 L9 0.5 L11 2.5 L13 0.5 L15 2.5 L17 0.5 L19 2.5 L21 0.5 L23 2.5 L25 0.5 L27 2.5" stroke="#b3d8b3" stroke-width="1" fill="none"/></svg><svg style="left:738px;top:661px" width="35" height="3"><path d="M0 2.5 L1 0.5 L3 2.5 L5 0.5 L7 2.5 L9 0.5 L11 2.5 L13 0.5 L15 2.5 L17 0.5 L19 2.5 L21 0.5 L23 2.5 L25 0.5 L27 2.5 L29 0.5 L31 2.5 L33 0.5 L35 2.5" stroke="#b3d8b3" stroke-width="1" fill="none"/></svg><div class="t m" style="left:780px;top:649px;color:#000;">)</div><div class="t m" style="left:786px;top:649px;color:#000;">)</div><div class="t dg" style="left:353px;top:670px;color:#999">255</div><div class="t m" style="left:489px;top:668px;color:#000;">{</div><div class="t dg" style="left:353px;top:689px;color:#999">256</div><div class="t m" style="left:513px;top:687px;color:#660000;">$oDB</div><div class="t m" style="left:537px;top:687px;color:#000;">-</div><div class="t m" style="left:543px;top:687px;color:#000;">&gt;</div><div class="a" style="left:549px;top:685px;width:54px;height:19px;background:#f6ebbc"></div><div class="t m" style="left:549px;top:687px;color:#000;">addColumn</div><div class="t m" style="left:603px;top:687px;color:#000;">(</div><div class="t m mb" style="left:616px;top:687px;color:#008000;">yeyak</div><div class="a" style="left:610px;top:688px;width:4px;height:2px;background:#008000"></div><div class="a" style="left:652px;top:688px;width:4px;height:2px;background:#008000"></div><svg style="left:616px;top:699px" width="35" height="3"><path d="M0 2.5 L1 0.5 L3 2.5 L5 0.5 L7 2.5 L9 0.5 L11 2.5 L13 0.5 L15 2.5 L17 0.5 L19 2.5 L21 0.5 L23 2.5 L25 0.5 L27 2.5 L29 0.5 L31 2.5 L33 0.5 L35 2.5" stroke="#b3d8b3" stroke-width="1" fill="none"/></svg><div class="t m" style="left:658px;top:687px;color:#000;">,</div><div class="t m mb" style="left:677px;top:687px;color:#008000;">bday_sdate</div><div class="a" style="left:671px;top:688px;width:4px;height:2px;background:#008000"></div><div class="a" style="left:748px;top:688px;width:4px;height:2px;background:#008000"></div><svg style="left:677px;top:699px" width="28" height="3"><path d="M0 2.5 L1 0.5 L3 2.5 L5 0.5 L7 2.5 L9 0.5 L11 2.5 L13 0.5 L15 2.5 L17 0.5 L19 2.5 L21 0.5 L23 2.5 L25 0.5 L27 2.5" stroke="#b3d8b3" stroke-width="1" fill="none"/></svg><svg style="left:712px;top:699px" width="35" height="3"><path d="M0 2.5 L1 0.5 L3 2.5 L5 0.5 L7 2.5 L9 0.5 L11 2.5 L13 0.5 L15 2.5 L17 0.5 L19 2.5 L21 0.5 L23 2.5 L25 0.5 L27 2.5 L29 0.5 L31 2.5 L33 0.5 L35 2.5" stroke="#b3d8b3" stroke-width="1" fill="none"/></svg><div class="t m" style="left:754px;top:687px;color:#000;">,</div><div class="t m mb" style="left:773px;top:687px;color:#008000;">date</div><div class="a" style="left:767px;top:688px;width:4px;height:2px;background:#008000"></div><div class="a" style="left:802px;top:688px;width:4px;height:2px;background:#008000"></div><div class="t m" style="left:808px;top:687px;color:#000;">)</div><div class="t m" style="left:814px;top:687px;color:#000;">;</div><svg style="left:405px;top:555px" width="11" height="12"><path d="M0.5 0.5H10.5V8L5.5 11.5L0.5 8Z" fill="#fff" stroke="#c6c6c6"/><path d="M3 4.5H8" stroke="#c6c6c6"/></svg><svg style="left:405px;top:611px" width="11" height="12"><path d="M0.5 11.5H10.5V4L5.5 0.5L0.5 4Z" fill="#fff" stroke="#c6c6c6"/><path d="M3 7.5H8" stroke="#c6c6c6"/></svg><svg style="left:405px;top:650px" width="11" height="12"><path d="M0.5 0.5H10.5V8L5.5 11.5L0.5 8Z" fill="#fff" stroke="#c6c6c6"/><path d="M3 4.5H8" stroke="#c6c6c6"/></svg><div class="a" style="left:790px;top:553px;width:193px;height:18px;background:#faf38f;border:1px solid #8f8c6a;border-radius:3px"></div><div class="t" style="left:796px;top:561px;font-family:'Liberation Mono',monospace;font-size:8.33px;color:#3f3c22">Method &#x27;isColumnExists&#x27; not found in</div><div class="a" style="left:890px;top:591px;width:168px;height:18px;background:#faf38f;border:1px solid #8f8c6a;border-radius:3px"></div><div class="t" style="left:896px;top:599px;font-family:'Liberation Mono',monospace;font-size:8.33px;color:#3f3c22">Method &#x27;addColumn&#x27; not found in</div><div class="a" style="left:804px;top:648px;width:193px;height:18px;background:#faf38f;border:1px solid #8f8c6a;border-radius:3px"></div><div class="t" style="left:810px;top:656px;font-family:'Liberation Mono',monospace;font-size:8.33px;color:#3f3c22">Method &#x27;isColumnExists&#x27; not found in</div><div class="a" style="left:832px;top:686px;width:168px;height:18px;background:#faf38f;border:1px solid #8f8c6a;border-radius:3px"></div><div class="t" style="left:838px;top:694px;font-family:'Liberation Mono',monospace;font-size:8.33px;color:#3f3c22">Method &#x27;addColumn&#x27; not found in</div></div><div class="a" style="left:1345px;top:513px;width:1px;height:0px;"></div><svg style="left:1357px;top:602px" width="10" height="14"><path d="M0.5 0.5L9 6.5L0.5 12.5" fill="#f7faff" stroke="#000" stroke-width="1.2"/></svg><div class="a" style="left:1356px;top:603px;width:3px;height:12px;background:#f7faff"></div><div class="a" style="left:1371px;top:156px;width:14px;height:2px;background:#e9c600"></div><div class="a" style="left:1371px;top:164px;width:14px;height:4px;background:#e9c600"></div><div class="a" style="left:1371px;top:178px;width:14px;height:2px;background:#e9c600"></div><div class="a" style="left:1371px;top:203px;width:14px;height:2px;background:#e9c600"></div><div class="a" style="left:1371px;top:207px;width:14px;height:4px;background:#e9c600"></div><div class="a" style="left:1371px;top:214px;width:14px;height:2px;background:#e9c600"></div><div class="a" style="left:1371px;top:221px;width:14px;height:4px;background:#e9c600"></div><div class="a" style="left:1371px;top:228px;width:14px;height:2px;background:#e9c600"></div><div class="a" style="left:1371px;top:234px;width:14px;height:2px;background:#e9c600"></div><div class="a" style="left:1371px;top:239px;width:14px;height:2px;background:#e9c600"></div><div class="a" style="left:1371px;top:245px;width:14px;height:2px;background:#e9c600"></div><div class="a" style="left:1371px;top:250px;width:14px;height:2px;background:#e9c600"></div><div class="a" style="left:1371px;top:256px;width:14px;height:2px;background:#e9c600"></div><div class="a" style="left:1371px;top:261px;width:14px;height:2px;background:#e9c600"></div><div class="a" style="left:1371px;top:265px;width:14px;height:2px;background:#e9c600"></div><div class="a" style="left:1371px;top:270px;width:14px;height:2px;background:#e9c600"></div><div class="a" style="left:1371px;top:276px;width:14px;height:2px;background:#e9c600"></div><div class="a" style="left:1371px;top:280px;width:14px;height:2px;background:#e9c600"></div><div class="a" style="left:1371px;top:286px;width:14px;height:2px;background:#e9c600"></div><div class="a" style="left:1371px;top:292px;width:14px;height:2px;background:#e9c600"></div><div class="a" style="left:1371px;top:297px;width:14px;height:2px;background:#e9c600"></div><div class="a" style="left:1371px;top:303px;width:14px;height:2px;background:#e9c600"></div><div class="a" style="left:1371px;top:309px;width:14px;height:2px;background:#e9c600"></div><div class="a" style="left:1371px;top:317px;width:14px;height:2px;background:#e9c600"></div><div class="a" style="left:1371px;top:324px;width:14px;height:2px;background:#e9c600"></div><div class="a" style="left:1371px;top:332px;width:14px;height:2px;background:#e9c600"></div><div class="a" style="left:1371px;top:339px;width:14px;height:2px;background:#e9c600"></div><div class="a" style="left:1371px;top:346px;width:14px;height:2px;background:#e9c600"></div><div class="a" style="left:1371px;top:353px;width:14px;height:2px;background:#e9c600"></div><div class="a" style="left:1371px;top:361px;width:14px;height:2px;background:#e9c600"></div><div class="a" style="left:1371px;top:368px;width:14px;height:2px;background:#e9c600"></div><div class="a" style="left:1371px;top:373px;width:14px;height:2px;background:#e9c600"></div><div class="a" style="left:1371px;top:379px;width:14px;height:2px;background:#e9c600"></div><div class="a" style="left:1371px;top:386px;width:14px;height:2px;background:#e9c600"></div><div class="a" style="left:1371px;top:393px;width:14px;height:2px;background:#e9c600"></div><div class="a" style="left:1371px;top:400px;width:14px;height:2px;background:#e9c600"></div><div class="a" style="left:1371px;top:409px;width:14px;height:2px;background:#e9c600"></div><div class="a" style="left:1371px;top:415px;width:14px;height:4px;background:#e9c600"></div><div class="a" style="left:1371px;top:422px;width:14px;height:2px;background:#e9c600"></div><div class="a" style="left:1371px;top:429px;width:14px;height:2px;background:#e9c600"></div><div class="a" style="left:1371px;top:435px;width:14px;height:2px;background:#e9c600"></div><div class="a" style="left:1371px;top:440px;width:14px;height:2px;background:#e9c600"></div><div class="a" style="left:1371px;top:446px;width:14px;height:2px;background:#e9c600"></div><div class="a" style="left:1371px;top:451px;width:14px;height:2px;background:#e9c600"></div><div class="a" style="left:1371px;top:456px;width:14px;height:2px;background:#e9c600"></div><div class="a" style="left:1371px;top:462px;width:14px;height:2px;background:#e9c600"></div><div class="a" style="left:1371px;top:469px;width:14px;height:2px;background:#e9c600"></div><div class="a" style="left:1371px;top:489px;width:14px;height:2px;background:#e9c600"></div><div class="a" style="left:1371px;top:496px;width:14px;height:2px;background:#e9c600"></div><div class="a" style="left:1371px;top:500px;width:14px;height:2px;background:#e9c600"></div><div class="a" style="left:1371px;top:505px;width:14px;height:2px;background:#e9c600"></div><div class="a" style="left:1371px;top:509px;width:14px;height:2px;background:#e9c600"></div><div class="a" style="left:1371px;top:514px;width:14px;height:2px;background:#e9c600"></div><div class="a" style="left:1371px;top:513px;width:14px;height:2px;background:#e9c600"></div><div class="a" style="left:1371px;top:518px;width:14px;height:2px;background:#e9c600"></div><div class="a" style="left:1371px;top:522px;width:14px;height:2px;background:#e9c600"></div><div class="a" style="left:1371px;top:527px;width:14px;height:2px;background:#e9c600"></div><div class="a" style="left:1371px;top:531px;width:14px;height:2px;background:#e9c600"></div><div class="a" style="left:1371px;top:536px;width:14px;height:2px;background:#e9c600"></div><div class="a" style="left:1371px;top:541px;width:14px;height:2px;background:#e9c600"></div><div class="a" style="left:1371px;top:545px;width:14px;height:2px;background:#e9c600"></div><div class="a" style="left:1371px;top:551px;width:14px;height:2px;background:#e9c600"></div><div class="a" style="left:1371px;top:556px;width:14px;height:2px;background:#e9c600"></div><div class="a" style="left:1371px;top:560px;width:14px;height:2px;background:#e9c600"></div><div class="a" style="left:1371px;top:565px;width:14px;height:2px;background:#e9c600"></div><div class="a" style="left:1371px;top:571px;width:14px;height:2px;background:#e9c600"></div><div class="a" style="left:1371px;top:576px;width:14px;height:2px;background:#e9c600"></div><div class="a" style="left:1371px;top:581px;width:14px;height:2px;background:#e9c600"></div><div class="a" style="left:1371px;top:585px;width:14px;height:2px;background:#e9c600"></div><div class="a" style="left:1371px;top:590px;width:14px;height:2px;background:#e9c600"></div><div class="a" style="left:1371px;top:594px;width:14px;height:2px;background:#e9c600"></div><div class="a" style="left:1371px;top:601px;width:14px;height:2px;background:#e9c600"></div><div class="a" style="left:1371px;top:605px;width:14px;height:2px;background:#e9c600"></div><div class="a" style="left:1371px;top:610px;width:14px;height:2px;background:#e9c600"></div><div class="a" style="left:1371px;top:614px;width:14px;height:2px;background:#e9c600"></div><div class="a" style="left:1371px;top:618px;width:14px;height:2px;background:#e9c600"></div><div class="a" style="left:1371px;top:623px;width:14px;height:2px;background:#e9c600"></div><div class="a" style="left:1371px;top:627px;width:14px;height:2px;background:#e9c600"></div><div class="a" style="left:1371px;top:632px;width:14px;height:2px;background:#e9c600"></div><div class="a" style="left:1371px;top:636px;width:14px;height:2px;background:#e9c600"></div><div class="a" style="left:1371px;top:641px;width:14px;height:2px;background:#e9c600"></div><div class="a" style="left:1371px;top:648px;width:14px;height:2px;background:#e9c600"></div><div class="a" style="left:1371px;top:652px;width:14px;height:2px;background:#e9c600"></div><div class="a" style="left:1371px;top:656px;width:14px;height:2px;background:#e9c600"></div><div class="a" style="left:1371px;top:661px;width:14px;height:2px;background:#e9c600"></div><div class="a" style="left:1371px;top:666px;width:14px;height:2px;background:#e9c600"></div><div class="a" style="left:1371px;top:670px;width:14px;height:2px;background:#e9c600"></div><div class="a" style="left:1371px;top:677px;width:14px;height:2px;background:#e9c600"></div><div class="a" style="left:1371px;top:681px;width:14px;height:2px;background:#e9c600"></div><div class="a" style="left:1371px;top:686px;width:14px;height:2px;background:#e9c600"></div><div class="a" style="left:1371px;top:690px;width:14px;height:2px;background:#e9c600"></div><div class="a" style="left:1371px;top:694px;width:14px;height:2px;background:#e9c600"></div><div class="a" style="left:1371px;top:699px;width:14px;height:2px;background:#e9c600"></div><div class="a" style="left:1371px;top:703px;width:14px;height:2px;background:#e9c600"></div><div class="a" style="left:1371px;top:707px;width:14px;height:2px;background:#e9c600"></div><div class="a" style="left:1371px;top:708px;width:14px;height:2px;background:#e9c600"></div><div class="a" style="left:1371px;top:713px;width:14px;height:2px;background:#e9c600"></div><div class="a" style="left:1371px;top:717px;width:14px;height:2px;background:#e9c600"></div><div class="a" style="left:1371px;top:725px;width:14px;height:4px;background:#e9c600"></div><div class="a" style="left:1371px;top:732px;width:14px;height:2px;background:#e9c600"></div><div class="a" style="left:1371px;top:737px;width:14px;height:2px;background:#e9c600"></div><div class="a" style="left:1371px;top:743px;width:14px;height:2px;background:#e9c600"></div><div class="a" style="left:1371px;top:747px;width:14px;height:2px;background:#e9c600"></div><div class="a" style="left:1371px;top:752px;width:14px;height:2px;background:#e9c600"></div><div class="a" style="left:1371px;top:757px;width:14px;height:2px;background:#e9c600"></div><div class="a" style="left:1371px;top:761px;width:14px;height:2px;background:#e9c600"></div><div class="a" style="left:1371px;top:766px;width:14px;height:2px;background:#e9c600"></div><div class="a" style="left:1371px;top:771px;width:14px;height:2px;background:#e9c600"></div><div class="a" style="left:1371px;top:775px;width:14px;height:2px;background:#e9c600"></div><div class="a" style="left:1371px;top:780px;width:14px;height:2px;background:#e9c600"></div><div class="a" style="left:1371px;top:784px;width:14px;height:4px;background:#e9c600"></div><div class="a" style="left:1371px;top:789px;width:14px;height:4px;background:#e9c600"></div><div class="a" style="left:1371px;top:794px;width:14px;height:4px;background:#e9c600"></div><div class="a" style="left:1371px;top:802px;width:14px;height:2px;background:#e9c600"></div><div class="a" style="left:1371px;top:806px;width:14px;height:9px;background:#e9c600"></div><div class="a" style="left:1371px;top:820px;width:14px;height:5px;background:#e9c600"></div><div class="a" style="left:1371px;top:827px;width:14px;height:2px;background:#e9c600"></div><div class="a" style="left:1371px;top:833px;width:14px;height:2px;background:#e9c600"></div><div class="a" style="left:1371px;top:836px;width:14px;height:2px;background:#e9c600"></div><div class="a" style="left:1371px;top:842px;width:14px;height:9px;background:#e9c600"></div><div class="a" style="left:1371px;top:856px;width:14px;height:2px;background:#e9c600"></div><div class="a" style="left:1371px;top:860px;width:14px;height:2px;background:#e9c600"></div><div class="a" style="left:1371px;top:865px;width:14px;height:2px;background:#e9c600"></div><div class="a" style="left:1371px;top:869px;width:14px;height:2px;background:#e9c600"></div><div class="a" style="left:1371px;top:874px;width:14px;height:2px;background:#e9c600"></div><div class="a" style="left:1371px;top:856px;width:14px;height:2px;background:#e9c600"></div><div class="a" style="left:1371px;top:860px;width:14px;height:2px;background:#e9c600"></div><div class="a" style="left:1371px;top:865px;width:14px;height:2px;background:#e9c600"></div><div class="a" style="left:1371px;top:869px;width:14px;height:2px;background:#e9c600"></div><div class="a" style="left:1371px;top:874px;width:14px;height:2px;background:#e9c600"></div><div class="a" style="left:1371px;top:878px;width:14px;height:13px;background:#e9c600"></div><div class="a" style="left:1371px;top:893px;width:14px;height:5px;background:#e9c600"></div><div class="a" style="left:1371px;top:902px;width:14px;height:2px;background:#e9c600"></div><div class="a" style="left:1371px;top:905px;width:14px;height:2px;background:#e9c600"></div><div class="a" style="left:1371px;top:911px;width:14px;height:2px;background:#e9c600"></div><div class="a" style="left:1371px;top:914px;width:14px;height:2px;background:#e9c600"></div><div class="a" style="left:1371px;top:920px;width:14px;height:3px;background:#e9c600"></div><div class="a" style="left:1371px;top:931px;width:14px;height:2px;background:#e9c600"></div><div class="a" style="left:1371px;top:940px;width:14px;height:2px;background:#e9c600"></div><div class="a" style="left:1373px;top:139px;width:10px;height:10px;background:#e9c600"></div><div class="a" style="left:1371px;top:189px;width:14px;height:2px;background:#000"></div><div class="a" style="left:1371px;top:958px;width:14px;height:2px;background:#e0d2a8"></div><div class="a" style="left:1375px;top:879px;width:10px;height:79px;background:rgba(90,100,120,0.22)"></div><div class="a" style="left:1113px;top:57px;width:28px;height:19px;background:linear-gradient(#f6f6f6,#dadada);border:1px solid #8e8e8e;border-radius:3px"></div><svg style="left:1122px;top:65px" width="8" height="5"><path d="M0 0H7.5L3.75 4.5Z" fill="#666"/></svg><svg style="left:1150px;top:59px" width="11" height="14"><path d="M0 0L10.5 6.75L0 13.5Z" fill="#b3b3b3"/></svg><svg style="left:1172px;top:59px" width="16" height="15"><g fill="#bdbdbd"><ellipse cx="6" cy="7.5" rx="4.5" ry="5"/><path d="M11 3.5A4.5 4.5 0 0 1 11 11.5" stroke="#bdbdbd" stroke-width="1.3" fill="none"/><path d="M10 5L12 7.5L10 10Z"/></g><g stroke="#bdbdbd" stroke-width="1"><path d="M2 1L4 3.5M10 1L8 3.5M2 14L4 11.5M10 14L8 11.5M0 7.5H1.5"/></g></svg><svg style="left:1198px;top:59px" width="15" height="15"><path d="M0 2.5L6 7.5L0 12.5Z" fill="#bdbdbd"/><g fill="#c8c8c8"><rect x="5" y="1" width="2" height="2"/><rect x="9" y="1" width="2" height="2"/><rect x="7" y="3" width="2" height="2"/><rect x="11" y="3" width="2" height="2"/><rect x="5" y="5" width="2" height="2"/><rect x="9" y="5" width="2" height="2"/><rect x="13" y="5" width="2" height="2"/><rect x="7" y="7" width="2" height="2"/><rect x="11" y="7" width="2" height="2"/><rect x="5" y="9" width="2" height="2"/><rect x="9" y="9" width="2" height="2"/><rect x="13" y="9" width="2" height="2"/><rect x="7" y="11" width="2" height="2"/><rect x="11" y="11" width="2" height="2"/><rect x="9" y="13" width="2" height="2"/></g></svg><svg style="left:1223px;top:58px" width="16" height="16"><circle cx="3.8" cy="3.8" r="3" stroke="#e04848" stroke-width="1.3" fill="none"/><path d="M1.8 5.8L5.8 1.8" stroke="#e04848" stroke-width="1.3"/><ellipse cx="3.5" cy="11.5" rx="3" ry="3.2" fill="#3bb24a"/><path d="M0 9L1.5 10M0 14L1.5 13M7 9L5.5 10M7 14L5.5 13" stroke="#222" stroke-width="0.8"/><path d="M8 1H12A3.5 3.5 0 0 1 15 4.5V11.5A3.5 3.5 0 0 1 12 15H8V12.5H11A1.5 1.5 0 0 0 12.5 11V5A1.5 1.5 0 0 0 11 3.5H8Z" fill="#8a8a8a"/></svg><div class="a" style="left:1246px;top:56px;width:1px;height:22px;background:#c4c4c4"></div><div class="t" style="left:1254px;top:58px;font-size:7px;font-weight:bold;color:#555;letter-spacing:0.6px">VCS</div><svg style="left:1256px;top:66px" width="11" height="9"><path d="M3 0H8V4H10.5L5.5 8.5L0.5 4H3Z" fill="#3d8fc6"/></svg><div class="t" style="left:1279px;top:58px;font-size:7px;font-weight:bold;color:#555;letter-spacing:0.6px">VCS</div><svg style="left:1281px;top:66px" width="11" height="9"><path d="M3 8.5H8V4.5H10.5L5.5 0L0.5 4.5H3Z" fill="#2aa53a"/></svg><svg style="left:1304px;top:58px" width="16" height="16"><path d="M1 4.5H8V11.5H1Z" stroke="#6e6e6e" stroke-width="1.8" fill="none"/><path d="M5 14.5H12.5V9" stroke="#9a9a9a" stroke-width="1.6" fill="none"/><circle cx="11" cy="4.7" r="4.3" fill="#a9d8f5" stroke="#3d8fc6" stroke-width="0.9"/><path d="M11 2.3V4.8H13" stroke="#333" stroke-width="0.9" fill="none"/></svg><svg style="left:1329px;top:59px" width="15" height="15"><path d="M2.5 5.5H9A4 4 0 0 1 9 13.5H3" stroke="#9065b8" stroke-width="2.2" fill="none"/><path d="M0 5.5L4.5 1V10Z" fill="#9065b8"/></svg><div class="a" style="left:1352px;top:56px;width:1px;height:22px;background:#c4c4c4"></div><svg style="left:1365px;top:59px" width="16" height="16"><circle cx="6" cy="6" r="4.6" stroke="#6e6e6e" stroke-width="1.9" fill="none"/><path d="M9.5 9.5L14.5 14.5" stroke="#6e6e6e" stroke-width="2.4"/></svg><div class="a" style="left:1px;top:969px;width:1384px;height:1px;background:#a0a0a0"></div><div class="a" style="left:1px;top:970px;width:1384px;height:22px;background:#e8e8e8"></div><svg style="left:10px;top:974px" width="14" height="14"><rect x="0.75" y="0.75" width="12.5" height="11" fill="none" stroke="#555" stroke-width="1.5"/><path d="M3.2 0.5V12M10.8 0.5V12M0.5 6H3.2M10.8 6H13.5" stroke="#555" stroke-width="1.2"/><rect x="4.2" y="2" width="5.6" height="8.2" fill="#bdbdbd"/><path d="M0 13.2H14" stroke="#555" stroke-width="1.3"/></svg><div class="t" style="left:1145px;top:976px;font-size:12px;color:#000;letter-spacing:-1.15px">CRLF</div><svg style="left:1173px;top:977px" width="6" height="10"><path d="M0.5 3.5L2.75 0.5L5 3.5Z M0.5 6.5L2.75 9.5L5 6.5Z" fill="#555"/></svg><div class="t" style="left:1189px;top:976px;font-size:12px;color:#000;letter-spacing:-0.56px">UTF-8</div><svg style="left:1222px;top:977px" width="6" height="10"><path d="M0.5 3.5L2.75 0.5L5 3.5Z M0.5 6.5L2.75 9.5L5 6.5Z" fill="#555"/></svg><div class="t" style="left:1237px;top:976px;font-size:12px;color:#000;letter-spacing:-0.15px">Git: master</div><svg style="left:1298px;top:977px" width="6" height="10"><path d="M0.5 3.5L2.75 0.5L5 3.5Z M0.5 6.5L2.75 9.5L5 6.5Z" fill="#555"/></svg><svg style="left:1321px;top:977px" width="10" height="9"><path d="M1 4V2A2 2 0 0 1 5 2V3" stroke="#777" stroke-width="1.1" fill="none"/><rect x="2.5" y="3.5" width="7" height="5.5" rx="1" fill="#777"/><path d="M4.5 5H7.5M6 5V8" stroke="#e8e8e8" stroke-width="0.9"/></svg><svg style="left:1344px;top:974px" width="13" height="14"><path d="M3 5V3A3.5 2.5 0 0 1 10 3V5" stroke="#6e6e6e" stroke-width="1.2" fill="#e8e8e8"/><path d="M0.5 5.5H12.5" stroke="#6e6e6e" stroke-width="1.2"/><path d="M6.5 1.5V3" stroke="#6e6e6e" stroke-width="1"/><path d="M2.5 6.5Q1.5 11 4 12.5M10.5 6.5Q11.5 11 9 12.5" stroke="#6e6e6e" stroke-width="1.1" fill="none"/><path d="M4 10Q6.5 8 9 10" stroke="#6e6e6e" stroke-width="1.1" fill="none"/><path d="M4.5 7.5H5.5M7.5 7.5H8.5" stroke="#6e6e6e" stroke-width="1"/><path d="M2 13.5H5.5M7.5 13.5H11" stroke="#6e6e6e" stroke-width="1.2"/></svg><svg style="left:1365px;top:974px" width="17" height="15"><path d="M10.5 11.6A7 5.6 0 1 0 7.5 11.8C9 12 10 12 11 12.2L15 13.8L13 10.5" stroke="#6e6e6e" stroke-width="1.1" fill="none"/></svg><div class="a" style="left:0px;top:0px;width:1386px;height:1px;background:#1a7fd4"></div><div class="a" style="left:0px;top:0px;width:1px;height:993px;background:#1a7fd4"></div><div class="a" style="left:1385px;top:0px;width:1px;height:993px;background:#1a7fd4"></div><div class="a" style="left:0px;top:992px;width:1386px;height:1px;background:#1a7fd4"></div></body></html>
